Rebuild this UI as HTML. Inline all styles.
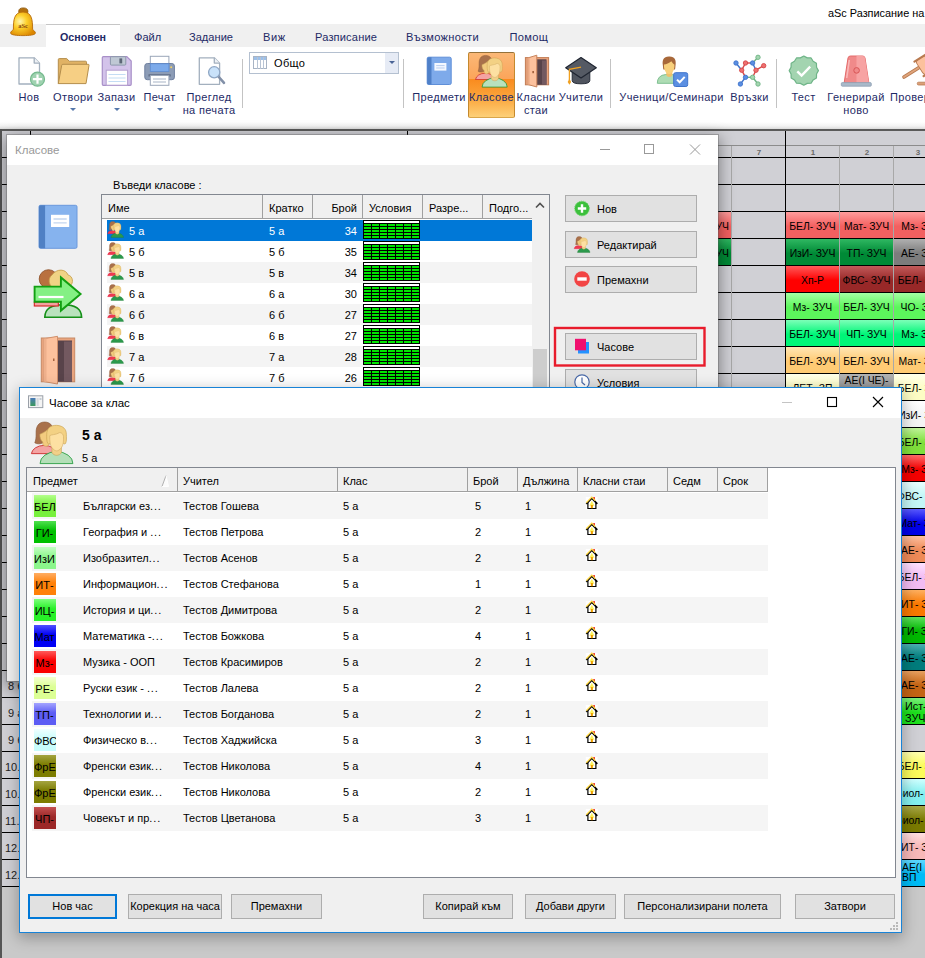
<!DOCTYPE html><html><head><meta charset="utf-8"><title>aSc</title><style>
*{box-sizing:border-box;margin:0;padding:0}
html,body{width:925px;height:958px;overflow:hidden;background:#fff}
body{position:relative;font-family:"Liberation Sans",sans-serif;font-size:11px;color:#000}
.abs{position:absolute}
.t{position:absolute;white-space:nowrap;line-height:14px}
.rb{position:absolute;white-space:nowrap;font-size:11.7px;color:#1e2a66;line-height:13px;text-align:center}
.tab{position:absolute;top:30px;font-size:11.1px;color:#1e2a66;white-space:nowrap;line-height:14px}
.cell{position:absolute;height:26px;font-size:10.4px;line-height:30px;text-align:center;white-space:nowrap;overflow:hidden;color:#000}
.hl{position:absolute;height:1px;background:#000}
.vl{position:absolute;width:1px;background:#a8a8a8}
.btn{position:absolute;background:#e1e1e1;border:1px solid #adadad;font-size:11px;text-align:center;white-space:nowrap}
.lbl{position:absolute;font-size:11px;white-space:nowrap;line-height:14px}
</style></head><body><div class="abs" style="left:0;top:0;width:925px;height:24px;background:#fff"></div><div class="t" style="left:828px;top:6px;font-size:10.9px;color:#000">aSc Разписание на</div><div class="abs" style="left:0;top:24px;width:925px;height:23px;background:#f0f0f0"></div><div class="abs" style="left:46px;top:24px;width:74px;height:23px;background:#fff;border-top:1px solid #c6c6c6"></div><div class="tab" style="left:60px;font-weight:bold;font-size:10.7px">Основен</div><div class="tab" style="left:134px;letter-spacing:0px">Файл</div><div class="tab" style="left:189px;letter-spacing:0px">Задание</div><div class="tab" style="left:263px;letter-spacing:0.6px">Виж</div><div class="tab" style="left:315px;letter-spacing:0.15px">Разписание</div><div class="tab" style="left:406px;letter-spacing:0.3px">Възможности</div><div class="tab" style="left:509.5px;letter-spacing:0.3px">Помощ</div><div class="abs" style="left:0;top:47px;width:925px;height:77px;background:#fff"></div><div class="abs" style="left:0;top:122px;width:925px;height:8px;background:linear-gradient(to bottom,#fff,#f3f3f3 50%,#dcdcdc 85%,#a8a8a8)"></div><div class="abs" id="tt" style="left:0;top:129px;width:925px;height:829px;background:#c9c9c9;overflow:hidden"><div class="abs" style="left:0;top:0;width:925px;height:757px;background:#d0d0d5"></div><div class="cell" style="left:678px;top:83px;width:53px;background:linear-gradient(to bottom,#ff9c9c,#f36060 55%);text-align:right;padding-right:2px;">- ЗУЧ</div><div class="cell" style="left:786px;top:83px;width:53px;background:linear-gradient(to bottom,#ff9c9c,#f36060 55%);">БЕЛ- ЗУЧ</div><div class="cell" style="left:840px;top:83px;width:53px;background:linear-gradient(to bottom,#ff9c9c,#f36060 55%);">Мат- ЗУЧ</div><div class="cell" style="left:894px;top:83px;width:54px;background:linear-gradient(to bottom,#ff9c9c,#f36060 55%);">Мз- ЗУЧ</div><div class="cell" style="left:678px;top:110px;width:53px;background:linear-gradient(to bottom,#2fb862,#008a36 55%);text-align:right;padding-right:2px;">- ЗУЧ</div><div class="cell" style="left:786px;top:110px;width:53px;background:linear-gradient(to bottom,#2fb862,#008a36 55%);">ИзИ- ЗУЧ</div><div class="cell" style="left:840px;top:110px;width:53px;background:linear-gradient(to bottom,#2fb862,#008a36 55%);">ТП- ЗУЧ</div><div class="cell" style="left:894px;top:110px;width:54px;background:linear-gradient(to bottom,#b0b0b0,#7c7c7c 55%);">АЕ- ЗУЧ</div><div class="cell" style="left:786px;top:137px;width:53px;background:linear-gradient(to bottom,#ff5a5a,#ff0000 55%);">Хп-Р</div><div class="cell" style="left:840px;top:137px;width:53px;background:linear-gradient(to bottom,#c25a5a,#982828 55%);">ФВС- ЗУЧ</div><div class="cell" style="left:894px;top:137px;width:54px;background:linear-gradient(to bottom,#c25a5a,#982828 55%);">БЕЛ- ЗУЧ</div><div class="cell" style="left:786px;top:164px;width:53px;background:linear-gradient(to bottom,#a4ffa4,#5cf65c 55%);">Мз- ЗУЧ</div><div class="cell" style="left:840px;top:164px;width:53px;background:linear-gradient(to bottom,#a4ffa4,#5cf65c 55%);">БЕЛ- ЗУЧ</div><div class="cell" style="left:894px;top:164px;width:54px;background:linear-gradient(to bottom,#a4ffa4,#5cf65c 55%);">ЧО- ЗУЧ</div><div class="cell" style="left:786px;top:191px;width:53px;background:linear-gradient(to bottom,#7dffb8,#00f678 55%);">БЕЛ- ЗУЧ</div><div class="cell" style="left:840px;top:191px;width:53px;background:linear-gradient(to bottom,#7dffb8,#00f678 55%);">ЧП- ЗУЧ</div><div class="cell" style="left:894px;top:191px;width:54px;background:linear-gradient(to bottom,#7dffb8,#00f678 55%);">Мз- ЗУЧ</div><div class="cell" style="left:786px;top:218px;width:53px;background:linear-gradient(to bottom,#ffe6b4,#ffcb74 55%);">БЕЛ- ЗУЧ</div><div class="cell" style="left:840px;top:218px;width:53px;background:linear-gradient(to bottom,#ffe6b4,#ffcb74 55%);">БЕЛ- ЗУЧ</div><div class="cell" style="left:894px;top:218px;width:54px;background:linear-gradient(to bottom,#ffe6b4,#ffcb74 55%);">Мат- ЗУЧ</div><div class="cell" style="left:786px;top:245px;width:53px;background:linear-gradient(to bottom,#ffffea,#fdfdc4 55%);">ЛЕТ- ЗП</div><div class="cell" style="left:894px;top:245px;width:54px;background:linear-gradient(to bottom,#ffffea,#fdfdc4 55%);">БЕЛ- ЗУЧ</div><div class="cell" style="left:894px;top:272px;width:54px;background:linear-gradient(to bottom,#ffffff,#f4f4f4 55%);">ИзИ- ЗУЧ</div><div class="cell" style="left:894px;top:299px;width:54px;background:linear-gradient(to bottom,#c0f49a,#7fe03c 55%);">БЕЛ- ЗУЧ</div><div class="cell" style="left:894px;top:326px;width:54px;background:linear-gradient(to bottom,#ff6a6a,#f40000 55%);">Мз- ЗУЧ</div><div class="cell" style="left:894px;top:353px;width:54px;background:linear-gradient(to bottom,#eaffff,#c4f6f6 55%);">ФВС- ЗУЧ</div><div class="cell" style="left:894px;top:380px;width:54px;background:linear-gradient(to bottom,#5a5aff,#0000e8 55%);">Мат- ЗУЧ</div><div class="cell" style="left:894px;top:407px;width:54px;background:linear-gradient(to bottom,#ffc0a0,#ee8a58 55%);">АЕ- ЗУЧ</div><div class="cell" style="left:894px;top:434px;width:54px;background:linear-gradient(to bottom,#ffe2ff,#f2bcf2 55%);">БЕЛ- ЗУЧ</div><div class="cell" style="left:894px;top:461px;width:54px;background:linear-gradient(to bottom,#ffb060,#fa7800 55%);">ИТ- ЗУЧ</div><div class="cell" style="left:894px;top:488px;width:54px;background:linear-gradient(to bottom,#5ce05c,#00b800 55%);">ГИ- ЗУЧ</div><div class="cell" style="left:894px;top:515px;width:54px;background:linear-gradient(to bottom,#4cb0b0,#007c7c 55%);">АЕ- ЗУЧ</div><div class="cell" style="left:894px;top:542px;width:54px;background:linear-gradient(to bottom,#e8a060,#c46414 55%);">АЕ- ЗУЧ</div><div class="cell" style="left:894px;top:623px;width:54px;background:linear-gradient(to bottom,#ffffb0,#fbfb5a 55%);">БЕЛ- ЗУЧ</div><div class="cell" style="left:894px;top:650px;width:54px;background:linear-gradient(to bottom,#d0ffff,#84f0f0 55%);">Биол- ЗУЧ</div><div class="cell" style="left:894px;top:677px;width:54px;background:linear-gradient(to bottom,#a8a848,#7a7a00 55%);">Биол- ЗУЧ</div><div class="cell" style="left:894px;top:704px;width:54px;background:linear-gradient(to bottom,#ffe0e0,#f8b8b8 55%);">ИТ- ЗУЧ</div><div class="cell" style="left:840px;top:245px;width:53px;background:linear-gradient(to bottom,#b4b4b4,#8a8a8a 70%);line-height:12px;padding-top:1px">АЕ(І ЧЕ)-<br>ЗУЧ</div><div class="cell" style="left:894px;top:569px;width:54px;background:linear-gradient(to bottom,#7cf07c,#1ee01e 55%);line-height:12px;padding:2px 0 0 11px;text-align:left;font-size:10.8px">Ист-<br>ЗУЧ</div><div class="cell" style="left:894px;top:731px;width:54px;background:linear-gradient(to bottom,#60d8ff,#00bcf6 55%);line-height:9.5px;padding:3px 0 0 8px;text-align:left">АЕ(І ЧЕ)-<br>ВП</div><div class="hl" style="left:2px;top:28px;width:923px"></div><div class="hl" style="left:2px;top:55px;width:923px"></div><div class="hl" style="left:2px;top:82px;width:923px"></div><div class="hl" style="left:2px;top:109px;width:923px"></div><div class="hl" style="left:2px;top:136px;width:923px"></div><div class="hl" style="left:2px;top:163px;width:923px"></div><div class="hl" style="left:2px;top:190px;width:923px"></div><div class="hl" style="left:2px;top:217px;width:923px"></div><div class="hl" style="left:2px;top:244px;width:923px"></div><div class="hl" style="left:2px;top:271px;width:923px"></div><div class="hl" style="left:2px;top:298px;width:923px"></div><div class="hl" style="left:2px;top:325px;width:923px"></div><div class="hl" style="left:2px;top:352px;width:923px"></div><div class="hl" style="left:2px;top:379px;width:923px"></div><div class="hl" style="left:2px;top:406px;width:923px"></div><div class="hl" style="left:2px;top:433px;width:923px"></div><div class="hl" style="left:2px;top:460px;width:923px"></div><div class="hl" style="left:2px;top:487px;width:923px"></div><div class="hl" style="left:2px;top:514px;width:923px"></div><div class="hl" style="left:2px;top:541px;width:923px"></div><div class="hl" style="left:2px;top:568px;width:923px"></div><div class="hl" style="left:2px;top:595px;width:923px"></div><div class="hl" style="left:2px;top:622px;width:923px"></div><div class="hl" style="left:2px;top:649px;width:923px"></div><div class="hl" style="left:2px;top:676px;width:923px"></div><div class="hl" style="left:2px;top:703px;width:923px"></div><div class="hl" style="left:2px;top:730px;width:923px"></div><div class="hl" style="left:2px;top:757px;width:923px"></div><div class="abs" style="left:30px;top:16px;width:895px;height:1px;background:#8c8c8c"></div><div class="vl" style="left:84px;top:17px;height:740px"></div><div class="vl" style="left:138px;top:17px;height:740px"></div><div class="vl" style="left:192px;top:17px;height:740px"></div><div class="vl" style="left:246px;top:17px;height:740px"></div><div class="vl" style="left:300px;top:17px;height:740px"></div><div class="vl" style="left:354px;top:17px;height:740px"></div><div class="vl" style="left:461px;top:17px;height:740px"></div><div class="vl" style="left:515px;top:17px;height:740px"></div><div class="vl" style="left:569px;top:17px;height:740px"></div><div class="vl" style="left:623px;top:17px;height:740px"></div><div class="vl" style="left:677px;top:17px;height:740px"></div><div class="vl" style="left:731px;top:17px;height:740px"></div><div class="vl" style="left:839px;top:17px;height:740px"></div><div class="vl" style="left:893px;top:17px;height:740px"></div><div class="abs" style="left:29.8px;top:1px;width:1.3px;height:756px;background:#000"></div><div class="abs" style="left:406.8px;top:1px;width:1.3px;height:756px;background:#000"></div><div class="abs" style="left:784.8px;top:1px;width:1.3px;height:756px;background:#000"></div><div class="t" style="left:749px;top:18px;width:20px;text-align:center;font-size:8px;font-weight:bold;color:#6a6a6a;line-height:11px">7</div><div class="t" style="left:803px;top:18px;width:20px;text-align:center;font-size:8px;font-weight:bold;color:#6a6a6a;line-height:11px">1</div><div class="t" style="left:857px;top:18px;width:20px;text-align:center;font-size:8px;font-weight:bold;color:#6a6a6a;line-height:11px">2</div><div class="t" style="left:908px;top:18px;width:20px;text-align:center;font-size:8px;font-weight:bold;color:#6a6a6a;line-height:11px">3</div><div class="t" style="left:8px;top:549.6px;font-size:11px;color:#222">8 б</div><div class="t" style="left:8px;top:576.6px;font-size:11px;color:#222">9 а</div><div class="t" style="left:8px;top:603.6px;font-size:11px;color:#222">9 б</div><div class="t" style="left:5px;top:630.6px;font-size:11px;color:#222">10.</div><div class="t" style="left:5px;top:657.6px;font-size:11px;color:#222">10.</div><div class="t" style="left:5px;top:684.6px;font-size:11px;color:#222">11.</div><div class="t" style="left:5px;top:711.6px;font-size:11px;color:#222">12.</div><div class="t" style="left:5px;top:738.6px;font-size:11px;color:#222">12.</div><div class="abs" style="left:0;top:0;width:925px;height:2px;background:#5a5a5a"></div><div class="abs" style="left:0;top:0;width:1.600px;height:829px;background:#555"></div></div><div class="abs" style="left:468px;top:52px;width:47px;height:66px;border:1px solid #c4892e;border-color:#94713a #c4892e #d9a64a #c4892e;border-radius:2px;background:linear-gradient(to bottom,#fbb877 0%,#fba55a 40%,#f98b1e 41%,#fba53c 70%,#fdd078 100%)"></div><div class="rb" style="left:-31px;width:120px;top:91px;font-size:11px;letter-spacing:0.35px;">Нов</div><div class="rb" style="left:13px;width:120px;top:91px;font-size:11px;letter-spacing:0.35px;">Отвори</div><div class="abs" style="left:70px;top:108px;width:0;height:0;border-left:3px solid transparent;border-right:3px solid transparent;border-top:3.5px solid #5577aa"></div><div class="rb" style="left:56.5px;width:120px;top:91px;font-size:11px;letter-spacing:0.35px;">Запази</div><div class="abs" style="left:113.5px;top:108px;width:0;height:0;border-left:3px solid transparent;border-right:3px solid transparent;border-top:3.5px solid #5577aa"></div><div class="rb" style="left:99.5px;width:120px;top:91px;font-size:11px;letter-spacing:0.35px;">Печат</div><div class="abs" style="left:156.5px;top:108px;width:0;height:0;border-left:3px solid transparent;border-right:3px solid transparent;border-top:3.5px solid #5577aa"></div><div class="rb" style="left:149px;width:120px;top:91px;font-size:11px;letter-spacing:0.35px;">Преглед</div><div class="rb" style="left:149px;width:120px;top:104px;font-size:11px;letter-spacing:0.35px;">на печата</div><div class="rb" style="left:379px;width:120px;top:91px;font-size:11px;letter-spacing:0.35px;">Предмети</div><div class="rb" style="left:431.5px;width:120px;top:91px;font-size:11px;letter-spacing:0.35px;">Класове</div><div class="rb" style="left:476px;width:120px;top:91px;font-size:11px;letter-spacing:0.35px;">Класни</div><div class="rb" style="left:476px;width:120px;top:104px;font-size:11px;letter-spacing:0.35px;">стаи</div><div class="rb" style="left:521px;width:120px;top:91px;font-size:11px;letter-spacing:0.35px;">Учители</div><div class="rb" style="left:611.5px;width:120px;top:91px;font-size:11px;letter-spacing:0.35px;">Ученици/Семинари</div><div class="rb" style="left:689.5px;width:120px;top:91px;font-size:11px;letter-spacing:0.35px;">Връзки</div><div class="rb" style="left:743.5px;width:120px;top:91px;font-size:11px;letter-spacing:0.35px;">Тест</div><div class="rb" style="left:796px;width:120px;top:91px;font-size:11px;letter-spacing:0.35px;">Генерирай</div><div class="rb" style="left:796px;width:120px;top:104px;font-size:11px;letter-spacing:0.35px;">ново</div><div class="rb" style="left:890px;top:91px;text-align:left;font-size:11px;letter-spacing:0.35px;">Проверка</div><div class="abs" style="left:242px;top:59px;width:1px;height:49px;background:#c3c3c3"></div><div class="abs" style="left:403px;top:59px;width:1px;height:49px;background:#c3c3c3"></div><div class="abs" style="left:610px;top:59px;width:1px;height:49px;background:#c3c3c3"></div><div class="abs" style="left:776px;top:59px;width:1px;height:49px;background:#c3c3c3"></div><div class="abs" style="left:249px;top:52px;width:150px;height:22px;border:1px solid #b4c0d0;background:#fff"></div><div class="abs" style="left:385px;top:53px;width:13px;height:20px;background:#e6ebf5"></div><div class="abs" style="left:388.5px;top:61px;width:0;height:0;border-left:3px solid transparent;border-right:3px solid transparent;border-top:3.5px solid #4a6496"></div><div class="t" style="left:274px;top:56px;font-size:11px;letter-spacing:0.35px;color:#000">Общо</div><svg class="abs" style="left:0;top:47px" width="925" height="76" viewBox="0 47 925 76"><rect x="253.5" y="56.5" width="13" height="12" fill="#fff" stroke="#a8b4c4"/><rect x="254" y="57" width="12" height="3" fill="#9cc0ea"/><path d="M257.5 57v12M260.5 57v12M263.5 57v12" stroke="#b8c4d4" stroke-width="1" fill="none"/><path d="M19 57.8h15.2l5.3 5.3V84h-20.5z" fill="#fff" stroke="#a3b0be" stroke-width="1.3" stroke-linejoin="round"/><path d="M34.2 57.8v5.3h5.3" fill="#eef1f5" stroke="#a3b0be" stroke-width="1.3" stroke-linejoin="round"/><circle cx="37.5" cy="79.2" r="7" fill="#9fd2b0" stroke="#74b98d" stroke-width="1.2"/><path d="M37.5 74.6v9.2M32.9 79.2h9.2" stroke="#fff" stroke-width="2.2"/><path d="M58.3 83.6V59.6q0-1 1-1h7.4l2.6 2.6h16.2q1 0 1 1v3z" fill="#e0b264" stroke="#b48e4c" stroke-width="1"/><path d="M58.3 83.6l3.4-18.3q.2-1 1.2-1h25.3q1 0 .8 1l-3 18.3z" fill="#f6cf84" stroke="#b48e4c" stroke-width="1" stroke-linejoin="round"/><path d="M103.3 56.7h23.5l4.4 4.4v23.2q0 1-1 1h-26.9q-1 0-1-1v-26.600q0-1 1-1z" fill="#d3c3ea" stroke="#a88fc8" stroke-width="1.2"/><rect x="110.4" y="56.7" width="15.4" height="8.4" rx="1" fill="#bfc8d4" stroke="#8c98aa" stroke-width="1"/><rect x="119.4" y="58.4" width="2.8" height="5" fill="#5c6676"/><rect x="106.2" y="70.2" width="21.4" height="15" fill="#fff" stroke="#b4a0d0" stroke-width="1"/><path d="M108.5 74.5h17M108.500 78h17M108.500 81.500h17" stroke="#c4ddf4" stroke-width="1.200"/><rect x="150.3" y="56.3" width="18.600" height="9" fill="#fff" stroke="#9aa6b8" stroke-width="1"/><rect x="144.800" y="63.500" width="29.600" height="16.200" rx="2.500" fill="#8c9cb6" stroke="#6f80a0" stroke-width="1"/><rect x="150.300" y="63.800" width="18.600" height="7.600" fill="#7caaea" stroke="#5c8cd4" stroke-width=".8"/><circle cx="171.200" cy="67.300" r="1" fill="#f4d060"/><rect x="148.500" y="74.300" width="22.200" height="2.200" fill="#5c6a84"/><rect x="150.300" y="75.500" width="18.600" height="9.800" fill="#fff" stroke="#9aa6b8" stroke-width="1"/><path d="M153 79h13M153 82h13" stroke="#a8b4c6" stroke-width="1.200"/><path d="M199.300 57.800h15l5.300 5.300V84.300h-20.300z" fill="#fff" stroke="#a3b0be" stroke-width="1.300" stroke-linejoin="round"/><path d="M214.300 57.800v5.300h5.300" fill="#eef1f5" stroke="#a3b0be" stroke-width="1.300" stroke-linejoin="round"/><path d="M218.400 76.500l5.600 6.300" stroke="#8290a8" stroke-width="2.600" stroke-linecap="round"/><circle cx="214.200" cy="72.300" r="5.600" fill="#c9e2fa" stroke="#8ea6c4" stroke-width="1.300"/><rect x="427.200" y="57.200" width="24" height="27.300" rx="1.500" fill="#7eaaea" stroke="#5f8fd8" stroke-width="1"/><path d="M427.200 58.700q0-1.500 1.500-1.500h2.800v27.300h-2.800q-1.500 0-1.500-1.500z" fill="#4f80c8"/><rect x="434.400" y="63" width="12" height="7.600" fill="#f4f8ff"/><path d="M436.200 65.600h8.400M436.200 68h8.400" stroke="#b9cdee" stroke-width="1"/><path d="M 475.50 79.50 A 9.80 7.00 0 0 1 495.00 79.50 Z" fill="#f4a3a3" stroke="#c82424" stroke-width="0.70"/><path d="M 485.70 55.40 C 480.20 55.40 479.00 59.70 479.10 63.70 C 479.20 67.20 478.80 69.70 478.10 71.20 C 479.70 72.40 482.70 72.20 484.20 71.20 L 491.20 65.20 L 491.50 58.70 C 490.00 56.20 488.00 55.40 485.70 55.40 Z" fill="#a9714b" stroke="#8c5a38" stroke-width="0.50"/><path d="M 482.00 64.70 C 483.70 64.00 485.70 63.20 487.20 61.70 L 489.20 61.70 L 489.20 72.20 C 488.20 74.40 485.20 74.40 484.20 72.40 L 484.20 70.70 C 482.60 69.40 481.90 67.20 482.00 64.70 Z" fill="#f3cb7f" stroke="#c9a55a" stroke-width="0.50"/><path d="M 482.10 87.10 A 12.55 9.10 0 0 1 507.20 87.10 Z" fill="#b8e1bd" stroke="#169026" stroke-width="0.70"/><path d="M 491.20 74.70 L 491.20 78.70 C 492.70 81.50 496.90 81.50 498.40 78.70 L 498.40 74.70 Z" fill="#f1d089" stroke="#c9a55a" stroke-width="0.50"/><path d="M 494.70 57.90 C 489.70 57.70 487.20 60.70 487.20 64.70 C 487.20 67.20 487.00 69.70 488.00 71.70 C 488.80 72.50 489.80 72.00 490.00 71.20 L 499.60 71.20 C 499.80 72.00 500.80 72.50 501.60 71.70 C 502.60 69.70 502.20 67.20 502.20 64.70 C 502.20 61.20 500.20 58.20 494.70 57.90 Z" fill="#f3d184" stroke="#caa352" stroke-width="0.50"/><path d="M 489.50 65.80 C 490.70 64.80 493.70 65.40 497.20 63.40 C 498.80 63.60 499.80 64.80 500.00 66.20 C 500.20 70.20 499.80 73.20 498.40 75.00 C 497.20 76.60 495.80 77.40 494.80 77.40 C 493.80 77.40 492.40 76.60 491.20 75.00 C 489.80 73.20 489.40 70.20 489.50 65.80 Z" fill="#fde0a2" stroke="#d4ae68" stroke-width="0.50"/><rect x="525.4" y="57.600" width="23.200" height="27.200" fill="#e9a47e" stroke="#c27c54" stroke-width="1"/><rect x="536.500" y="59.300" width="10" height="25.500" fill="#58434a"/><rect x="542" y="60.500" width="4.500" height="24.300" fill="#735960"/><path d="M527.300 58.100L536.800 55.200V87L527.300 84.300Z" fill="#fcc19d" stroke="#c8845c" stroke-width="1" stroke-linejoin="round"/><path d="M527.300 58.100l2.200-.6v27.400l-2.200-.6z" fill="#eaa882"/><rect x="532.300" y="71" width="1.700" height="2.200" fill="#a5633f"/><path d="M572.200 71v9.500q0 3.300 8.800 3.300t8.800-3.300V71z" fill="#50555f" stroke="#262c38" stroke-width="1"/><path d="M581 57.600L596.300 67.800L581 78L565.700 67.800Z" fill="#555a64" stroke="#1f2531" stroke-width="1.200" stroke-linejoin="round"/><path d="M581 67.200L569.400 69.400V80" fill="none" stroke="#f0a020" stroke-width="1.300"/><path d="M569.400 78.500l-1.700 3.500l1.700 2.800l1.700-2.800z" fill="#f0a020"/><path d="M657.300 83.300q0-8 8.500-8.800h6.500q8.500.8 8.500 8.800z" fill="#aedcb4" stroke="#7fc092" stroke-width="1"/><path d="M666.300 71h6v4.500q-3 3-6 0z" fill="#efc06c"/><path d="M669.200 56.500c-5.800-.2-7 4-6.400 8.200c.3 2 .2 3.600.6 4.800h11.600c.4-1.200.3-2.800.6-4.800c.6-4.200-.6-8.400-6.400-8.200z" fill="#a8683a"/><path d="M664 64.600c2.200-.4 5.200-1.400 7.400-3.400c.8 1.600 2 2.600 3 3.400c.4 5-1.800 9.400-5.200 9.400s-5.600-4.400-5.200-9.400z" fill="#f8d07c"/><rect x="673.700" y="72.700" width="14" height="13.800" rx="1.800" fill="#5b8fe2" stroke="#3f74cc" stroke-width="1"/><path d="M677 79.600l2.700 2.700l5-5.400" fill="none" stroke="#fff" stroke-width="2"/><path d="M736 63L741.7 70.2" stroke="#3f74cc" stroke-width="1.400"/><path d="M745.5 63L741.7 70.2" stroke="#d64848" stroke-width="1.400"/><path d="M745.5 63L752.6 63" stroke="#d64848" stroke-width="1.400"/><path d="M752.6 63L756 70.2" stroke="#3f74cc" stroke-width="1.400"/><path d="M752.6 63L758 57.3" stroke="#6fb486" stroke-width="1.400"/><path d="M756 70.2L763.7 65.7" stroke="#d64848" stroke-width="1.400"/><path d="M741.7 70.2L745.5 77.3" stroke="#d64848" stroke-width="1.400"/><path d="M756 70.2L752.6 77.3" stroke="#d64848" stroke-width="1.400"/><path d="M745.5 77.3L752.6 77.3" stroke="#6fb486" stroke-width="1.400"/><path d="M745.5 77.3L740.4 84" stroke="#3f74cc" stroke-width="1.400"/><path d="M752.6 77.3L758 84" stroke="#6fb486" stroke-width="1.400"/><circle cx="736" cy="63" r="2.200" fill="#5b8fe2" stroke="#3f74cc" stroke-width=".9"/><circle cx="745.5" cy="63" r="2.200" fill="#ee7070" stroke="#d64848" stroke-width=".9"/><circle cx="752.6" cy="63" r="2.200" fill="#5b8fe2" stroke="#3f74cc" stroke-width=".9"/><circle cx="758" cy="57.3" r="2.200" fill="#a4d6b0" stroke="#6fb486" stroke-width=".9"/><circle cx="763.7" cy="65.7" r="2.200" fill="#ee7070" stroke="#d64848" stroke-width=".9"/><circle cx="741.7" cy="70.2" r="2.200" fill="#ee7070" stroke="#d64848" stroke-width=".9"/><circle cx="756" cy="70.2" r="2.200" fill="#ee7070" stroke="#d64848" stroke-width=".9"/><circle cx="745.5" cy="77.3" r="2.200" fill="#5b8fe2" stroke="#3f74cc" stroke-width=".9"/><circle cx="752.6" cy="77.3" r="2.200" fill="#a4d6b0" stroke="#6fb486" stroke-width=".9"/><circle cx="740.4" cy="84" r="2.200" fill="#5b8fe2" stroke="#3f74cc" stroke-width=".9"/><circle cx="758" cy="84" r="2.200" fill="#a4d6b0" stroke="#6fb486" stroke-width=".9"/><path d="M803.80 56.00 807.22 57.85 811.10 57.96 813.13 61.27 816.44 63.30 816.55 67.18 818.40 70.60 816.55 74.02 816.44 77.90 813.13 79.93 811.10 83.24 807.22 83.35 803.80 85.20 800.38 83.35 796.50 83.24 794.47 79.93 791.16 77.90 791.05 74.02 789.20 70.60 791.05 67.18 791.16 63.30 794.47 61.27 796.50 57.96 800.38 57.85Z" fill="#a3d4b0" stroke="#6eb487" stroke-width="1.200" stroke-linejoin="round"/><path d="M797.300 71.300l4.300 4.300l8.600-9" fill="none" stroke="#fff" stroke-width="2.400"/><path d="M844.200 82.600L848 58q.4-2 2.400-2h12.200q2 0 2.400 2L868.800 82.600Z" fill="#f08a8a" stroke="#e46a6a" stroke-width="1"/><path d="M856.500 56h6.100q2 0 2.400 2L868.800 82.600H856.500Z" fill="#f7a3a3"/><path d="M849.300 60l-2.600 18" stroke="#f9b8b8" stroke-width="1.600"/><circle cx="856.600" cy="70.400" r="2.800" fill="#f08a8a" stroke="#d85656" stroke-width="1"/><rect x="841.300" y="82.600" width="30" height="3.600" rx="1" fill="#a9b9c9" stroke="#8ea0b4" stroke-width=".8"/><path d="M904 77.100L919.500 67.300" stroke="#b87a50" stroke-width="3.600" stroke-linecap="round"/><path d="M904 77.100L919.500 67.300" stroke="#e0a57c" stroke-width="1.800" stroke-linecap="round"/><g transform="translate(-0.5 1.600) rotate(-32 919.500 67.300)"><rect x="920.500" y="58.800" width="12" height="17" rx="3.500" fill="#fcc19d" stroke="#b87a50" stroke-width=".9"/><rect x="918.500" y="57.600" width="16" height="2.200" rx="1" fill="#b87a50"/><rect x="918.500" y="74.800" width="16" height="2.200" rx="1" fill="#b87a50"/></g><rect x="917.300" y="82.200" width="14" height="2.800" rx="1.200" fill="#dca078" stroke="#b87a50" stroke-width=".8"/></svg><svg class="abs" style="left:8px;top:6px" width="30" height="38" viewBox="8 6 30 38"><defs><radialGradient id="bg1" cx="0.38" cy="0.4" r="0.68"><stop offset="0" stop-color="#fff6b0"/><stop offset="0.4" stop-color="#fdd02c"/><stop offset="1" stop-color="#dc8600"/></radialGradient></defs><ellipse cx="23.300" cy="11.400" rx="4.600" ry="3.500" fill="#b4700e" stroke="#8a5408" stroke-width=".8"/><path d="M13.400 29.500C13.400 20 14 12 23 12S32.600 20 32.600 29.500C33.900 30.500 35.400 31.800 35.400 33C35.400 35 29.300 35.600 23 35.600S10.600 35 10.600 33C10.600 31.800 12.100 30.500 13.400 29.500Z" fill="url(#bg1)" stroke="#b86c08" stroke-width=".9"/><text x="23" y="28.300" font-family="Liberation Serif,serif" font-size="6.500" font-weight="bold" fill="#8a4a10" text-anchor="middle">aSc</text></svg><div class="abs" id="d1" style="left:7px;top:135px;width:711px;height:546px;background:#f0f0f0;box-shadow:0 0 0 1px rgba(90,90,90,.35),0 4px 14px 2px rgba(0,0,0,.38)"><div class="abs" style="left:0;top:0;width:711px;height:30px;background:#fff"></div><div class="t" style="left:8px;top:8px;font-size:11.5px;color:#999">Класове</div><svg class="abs" style="left:588px;top:5px;" width="115" height="20" viewBox="595 140 115 20"><path d="M600 149.500h10" stroke="#999" stroke-width="1"/><rect x="644.500" y="144.500" width="9" height="9" fill="none" stroke="#999" stroke-width="1"/><path d="M690 144.500l10 10M700 144.500l-10 10" stroke="#999" stroke-width="1"/></svg><div class="lbl" style="left:106px;top:43px;">Въведи класове :</div><svg class="abs" style="left:23px;top:65px;" width="60" height="200" viewBox="30 200 60 200"><rect x="39" y="205.300" width="38" height="43" rx="1.500" fill="#86b3ee" stroke="#6a98dc" stroke-width="1"/><path d="M39 206.800q0-1.500 1.500-1.500h4.600v43h-4.600q-1.500 0-1.500-1.500z" fill="#4f80c4"/><rect x="51" y="214.800" width="18.200" height="12.200" fill="#fff"/><path d="M53.500 219h13.200M53.500 222.800h13.200" stroke="#c4d6f0" stroke-width="1.300"/><circle cx="48.500" cy="279" r="9.300" fill="#b9713f" stroke="#8a4c24" stroke-width=".8"/><path d="M52 275c5-7 14-6 16 0c5 1 6 8 2 11l-2 8h-14l-3-8c-3-4-2-9 1-11z" fill="#f0d385" stroke="#c49a48" stroke-width=".8"/><path d="M44.800 317.300q0-12.500 18.400-12.500t18.400 12.500z" fill="#b9e2bd" stroke="#159018" stroke-width="1.600"/><rect x="34.300" y="302" width="24" height="4" fill="#f4a0a0" stroke="#d42020" stroke-width="1.100"/><path d="M34.600 286.600h26.300v-9.200L80.600 294L60.900 310.600v-8.900H34.600z" fill="#84f084" stroke="#12a012" stroke-width="1.900" stroke-linejoin="miter"/><path d="M38.500 297h25" stroke="#fff" stroke-width="2.200"/><rect x="41.300" y="338" width="33.400" height="43.800" fill="#e9a47e" stroke="#c88a64" stroke-width="1"/><rect x="57.500" y="340.500" width="14.500" height="41.300" fill="#58434a"/><rect x="64" y="341.500" width="8" height="40.300" fill="#735960"/><path d="M43.500 338.800L57.500 336.300V384L43.500 381.500Z" fill="#fcc19d" stroke="#d0906c" stroke-width="1" stroke-linejoin="round"/><path d="M43.500 338.800l3-.6v44l-3-.7z" fill="#eeb08c"/><rect x="53" y="358.500" width="1.500" height="2.500" fill="#a5633f"/></svg><div class="abs" style="left:94px;top:59px;width:449px;height:300px;background:#fff;border:1px solid #828790"></div><div class="abs" style="left:95px;top:60px;width:430px;height:24px;background:#f0f0f0;border-bottom:1px solid #a0a0a0"></div><div class="abs" style="left:255px;top:60px;width:1px;height:24px;background:#a0a0a0"></div><div class="abs" style="left:305px;top:60px;width:1px;height:24px;background:#a0a0a0"></div><div class="abs" style="left:355px;top:60px;width:1px;height:24px;background:#a0a0a0"></div><div class="abs" style="left:415px;top:60px;width:1px;height:24px;background:#a0a0a0"></div><div class="abs" style="left:475px;top:60px;width:1px;height:24px;background:#a0a0a0"></div><div class="lbl" style="left:101px;top:66px;">Име</div><div class="lbl" style="left:262px;top:66px;">Кратко</div><div class="lbl" style="left:362px;top:66px;">Условия</div><div class="lbl" style="left:422px;top:66px;">Разре...</div><div class="lbl" style="left:482px;top:66px;">Подго...</div><div class="lbl" style="left:305px;top:66px;width:45px;text-align:right">Брой</div><div class="abs" style="left:525px;top:60px;width:17px;height:298px;background:#f0f0f0"></div><div class="abs" style="left:526px;top:214px;width:14px;height:140px;background:#cdcdcd"></div><svg class="abs" style="left:527px;top:65px;" width="12" height="10" viewBox="0 0 12 10"><path d="M2 7.500l4-4l4 4" fill="none" stroke="#505050" stroke-width="1.600"/></svg><div class="abs" style="left:100px;top:85px;width:425px;height:21px;background:#0078d7"></div><div class="lbl" style="left:122px;top:89px;color:#fff">5 а</div><div class="lbl" style="left:262px;top:89px;color:#fff">5 а</div><div class="lbl" style="left:305px;top:89px;width:45px;text-align:right;color:#fff">34</div><div class="abs" style="left:100px;top:106px;width:425px;height:21px;background:#fff"></div><div class="lbl" style="left:122px;top:110px;color:#000">5 б</div><div class="lbl" style="left:262px;top:110px;color:#000">5 б</div><div class="lbl" style="left:305px;top:110px;width:45px;text-align:right;color:#000">35</div><div class="abs" style="left:100px;top:127px;width:425px;height:21px;background:#f4f4f4"></div><div class="lbl" style="left:122px;top:131px;color:#000">5 в</div><div class="lbl" style="left:262px;top:131px;color:#000">5 в</div><div class="lbl" style="left:305px;top:131px;width:45px;text-align:right;color:#000">34</div><div class="abs" style="left:100px;top:148px;width:425px;height:21px;background:#fff"></div><div class="lbl" style="left:122px;top:152px;color:#000">6 а</div><div class="lbl" style="left:262px;top:152px;color:#000">6 а</div><div class="lbl" style="left:305px;top:152px;width:45px;text-align:right;color:#000">30</div><div class="abs" style="left:100px;top:169px;width:425px;height:21px;background:#f4f4f4"></div><div class="lbl" style="left:122px;top:173px;color:#000">6 б</div><div class="lbl" style="left:262px;top:173px;color:#000">6 б</div><div class="lbl" style="left:305px;top:173px;width:45px;text-align:right;color:#000">27</div><div class="abs" style="left:100px;top:190px;width:425px;height:21px;background:#fff"></div><div class="lbl" style="left:122px;top:194px;color:#000">6 в</div><div class="lbl" style="left:262px;top:194px;color:#000">6 в</div><div class="lbl" style="left:305px;top:194px;width:45px;text-align:right;color:#000">27</div><div class="abs" style="left:100px;top:211px;width:425px;height:21px;background:#f4f4f4"></div><div class="lbl" style="left:122px;top:215px;color:#000">7 а</div><div class="lbl" style="left:262px;top:215px;color:#000">7 а</div><div class="lbl" style="left:305px;top:215px;width:45px;text-align:right;color:#000">28</div><div class="abs" style="left:100px;top:232px;width:425px;height:21px;background:#fff"></div><div class="lbl" style="left:122px;top:236px;color:#000">7 б</div><div class="lbl" style="left:262px;top:236px;color:#000">7 б</div><div class="lbl" style="left:305px;top:236px;width:45px;text-align:right;color:#000">26</div><div class="abs" style="left:100px;top:253px;width:425px;height:21px;background:#f4f4f4"></div><div class="lbl" style="left:122px;top:257px;color:#000">7 в</div><div class="lbl" style="left:262px;top:257px;color:#000">7 в</div><div class="lbl" style="left:305px;top:257px;width:45px;text-align:right;color:#000">27</div><svg class="abs" style="left:93px;top:80px;" width="330" height="200" viewBox="100 215 330 200"><path d="M 107.65 233.65 A 4.90 3.50 0 0 1 117.40 233.65 Z" fill="#f03a50" stroke="#e02040" stroke-width="0.35"/><path d="M 112.75 221.60 C 110.00 221.60 109.40 223.75 109.45 225.75 C 109.50 227.50 109.30 228.75 108.95 229.50 C 109.75 230.10 111.25 230.00 112.00 229.50 L 115.50 226.50 L 115.65 223.25 C 114.90 222.00 113.90 221.60 112.75 221.60 Z" fill="#a9714b" stroke="#8c5a38" stroke-width="0.25"/><path d="M 110.90 226.25 C 111.75 225.90 112.75 225.50 113.50 224.75 L 114.50 224.75 L 114.50 230.00 C 114.00 231.10 112.50 231.10 112.00 230.10 L 112.00 229.25 C 111.20 228.60 110.85 227.50 110.90 226.25 Z" fill="#f3cb7f" stroke="#c9a55a" stroke-width="0.25"/><path d="M 110.95 237.45 A 6.28 4.55 0 0 1 123.50 237.45 Z" fill="#2c9a4c" stroke="#1c7c38" stroke-width="0.35"/><path d="M 115.50 231.25 L 115.50 233.25 C 116.25 234.65 118.35 234.65 119.10 233.25 L 119.10 231.25 Z" fill="#f1d089" stroke="#c9a55a" stroke-width="0.25"/><path d="M 117.25 222.85 C 114.75 222.75 113.50 224.25 113.50 226.25 C 113.50 227.50 113.40 228.75 113.90 229.75 C 114.30 230.15 114.80 229.90 114.90 229.50 L 119.70 229.50 C 119.80 229.90 120.30 230.15 120.70 229.75 C 121.20 228.75 121.00 227.50 121.00 226.25 C 121.00 224.50 120.00 223.00 117.25 222.85 Z" fill="#f3d184" stroke="#caa352" stroke-width="0.25"/><path d="M 114.65 226.80 C 115.25 226.30 116.75 226.60 118.50 225.60 C 119.30 225.70 119.80 226.30 119.90 227.00 C 120.00 229.00 119.80 230.50 119.10 231.40 C 118.50 232.20 117.80 232.60 117.30 232.60 C 116.80 232.60 116.10 232.20 115.50 231.40 C 114.80 230.50 114.60 229.00 114.65 226.80 Z" fill="#fde0a2" stroke="#d4ae68" stroke-width="0.25"/><rect x="363" y="220" width="57" height="19" fill="#000"/><rect x="364" y="221" width="55" height="2" fill="#fff"/><rect x="364" y="224" width="7" height="2" fill="#00e400"/><rect x="364" y="227" width="7" height="2" fill="#00e400"/><rect x="364" y="230" width="7" height="2" fill="#00e400"/><rect x="364" y="233" width="7" height="2" fill="#00e400"/><rect x="364" y="236" width="7" height="2" fill="#00e400"/><rect x="372" y="224" width="7" height="2" fill="#00e400"/><rect x="372" y="227" width="7" height="2" fill="#00e400"/><rect x="372" y="230" width="7" height="2" fill="#00e400"/><rect x="372" y="233" width="7" height="2" fill="#00e400"/><rect x="372" y="236" width="7" height="2" fill="#00e400"/><rect x="380" y="224" width="7" height="2" fill="#00e400"/><rect x="380" y="227" width="7" height="2" fill="#00e400"/><rect x="380" y="230" width="7" height="2" fill="#00e400"/><rect x="380" y="233" width="7" height="2" fill="#00e400"/><rect x="380" y="236" width="7" height="2" fill="#00e400"/><rect x="388" y="224" width="7" height="2" fill="#00e400"/><rect x="388" y="227" width="7" height="2" fill="#00e400"/><rect x="388" y="230" width="7" height="2" fill="#00e400"/><rect x="388" y="233" width="7" height="2" fill="#00e400"/><rect x="388" y="236" width="7" height="2" fill="#00e400"/><rect x="396" y="224" width="7" height="2" fill="#00e400"/><rect x="396" y="227" width="7" height="2" fill="#00e400"/><rect x="396" y="230" width="7" height="2" fill="#00e400"/><rect x="396" y="233" width="7" height="2" fill="#00e400"/><rect x="396" y="236" width="7" height="2" fill="#00e400"/><rect x="404" y="224" width="7" height="2" fill="#00e400"/><rect x="404" y="227" width="7" height="2" fill="#00e400"/><rect x="404" y="230" width="7" height="2" fill="#00e400"/><rect x="404" y="233" width="7" height="2" fill="#00e400"/><rect x="404" y="236" width="7" height="2" fill="#00e400"/><rect x="412" y="224" width="7" height="2" fill="#00e400"/><rect x="412" y="227" width="7" height="2" fill="#00e400"/><rect x="412" y="230" width="7" height="2" fill="#00e400"/><rect x="412" y="233" width="7" height="2" fill="#00e400"/><rect x="412" y="236" width="7" height="2" fill="#00e400"/><path d="M 107.65 254.65 A 4.90 3.50 0 0 1 117.40 254.65 Z" fill="#f03a50" stroke="#e02040" stroke-width="0.35"/><path d="M 112.75 242.60 C 110.00 242.60 109.40 244.75 109.45 246.75 C 109.50 248.50 109.30 249.75 108.95 250.50 C 109.75 251.10 111.25 251.00 112.00 250.50 L 115.50 247.50 L 115.65 244.25 C 114.90 243.00 113.90 242.60 112.75 242.60 Z" fill="#a9714b" stroke="#8c5a38" stroke-width="0.25"/><path d="M 110.90 247.25 C 111.75 246.90 112.75 246.50 113.50 245.75 L 114.50 245.75 L 114.50 251.00 C 114.00 252.10 112.50 252.10 112.00 251.10 L 112.00 250.25 C 111.20 249.60 110.85 248.50 110.90 247.25 Z" fill="#f3cb7f" stroke="#c9a55a" stroke-width="0.25"/><path d="M 110.95 258.45 A 6.28 4.55 0 0 1 123.50 258.45 Z" fill="#2c9a4c" stroke="#1c7c38" stroke-width="0.35"/><path d="M 115.50 252.25 L 115.50 254.25 C 116.25 255.65 118.35 255.65 119.10 254.25 L 119.10 252.25 Z" fill="#f1d089" stroke="#c9a55a" stroke-width="0.25"/><path d="M 117.25 243.85 C 114.75 243.75 113.50 245.25 113.50 247.25 C 113.50 248.50 113.40 249.75 113.90 250.75 C 114.30 251.15 114.80 250.90 114.90 250.50 L 119.70 250.50 C 119.80 250.90 120.30 251.15 120.70 250.75 C 121.20 249.75 121.00 248.50 121.00 247.25 C 121.00 245.50 120.00 244.00 117.25 243.85 Z" fill="#f3d184" stroke="#caa352" stroke-width="0.25"/><path d="M 114.65 247.80 C 115.25 247.30 116.75 247.60 118.50 246.60 C 119.30 246.70 119.80 247.30 119.90 248.00 C 120.00 250.00 119.80 251.50 119.10 252.40 C 118.50 253.20 117.80 253.60 117.30 253.60 C 116.80 253.60 116.10 253.20 115.50 252.40 C 114.80 251.50 114.60 250.00 114.65 247.80 Z" fill="#fde0a2" stroke="#d4ae68" stroke-width="0.25"/><rect x="363" y="241" width="57" height="19" fill="#000"/><rect x="364" y="242" width="55" height="2" fill="#fff"/><rect x="364" y="245" width="7" height="2" fill="#00e400"/><rect x="364" y="248" width="7" height="2" fill="#00e400"/><rect x="364" y="251" width="7" height="2" fill="#00e400"/><rect x="364" y="254" width="7" height="2" fill="#00e400"/><rect x="364" y="257" width="7" height="2" fill="#00e400"/><rect x="372" y="245" width="7" height="2" fill="#00e400"/><rect x="372" y="248" width="7" height="2" fill="#00e400"/><rect x="372" y="251" width="7" height="2" fill="#00e400"/><rect x="372" y="254" width="7" height="2" fill="#00e400"/><rect x="372" y="257" width="7" height="2" fill="#00e400"/><rect x="380" y="245" width="7" height="2" fill="#00e400"/><rect x="380" y="248" width="7" height="2" fill="#00e400"/><rect x="380" y="251" width="7" height="2" fill="#00e400"/><rect x="380" y="254" width="7" height="2" fill="#00e400"/><rect x="380" y="257" width="7" height="2" fill="#00e400"/><rect x="388" y="245" width="7" height="2" fill="#00e400"/><rect x="388" y="248" width="7" height="2" fill="#00e400"/><rect x="388" y="251" width="7" height="2" fill="#00e400"/><rect x="388" y="254" width="7" height="2" fill="#00e400"/><rect x="388" y="257" width="7" height="2" fill="#00e400"/><rect x="396" y="245" width="7" height="2" fill="#00e400"/><rect x="396" y="248" width="7" height="2" fill="#00e400"/><rect x="396" y="251" width="7" height="2" fill="#00e400"/><rect x="396" y="254" width="7" height="2" fill="#00e400"/><rect x="396" y="257" width="7" height="2" fill="#00e400"/><rect x="404" y="245" width="7" height="2" fill="#00e400"/><rect x="404" y="248" width="7" height="2" fill="#00e400"/><rect x="404" y="251" width="7" height="2" fill="#00e400"/><rect x="404" y="254" width="7" height="2" fill="#00e400"/><rect x="404" y="257" width="7" height="2" fill="#00e400"/><rect x="412" y="245" width="7" height="2" fill="#00e400"/><rect x="412" y="248" width="7" height="2" fill="#00e400"/><rect x="412" y="251" width="7" height="2" fill="#00e400"/><rect x="412" y="254" width="7" height="2" fill="#00e400"/><rect x="412" y="257" width="7" height="2" fill="#00e400"/><path d="M 107.65 275.65 A 4.90 3.50 0 0 1 117.40 275.65 Z" fill="#f03a50" stroke="#e02040" stroke-width="0.35"/><path d="M 112.75 263.60 C 110.00 263.60 109.40 265.75 109.45 267.75 C 109.50 269.50 109.30 270.75 108.95 271.50 C 109.75 272.10 111.25 272.00 112.00 271.50 L 115.50 268.50 L 115.65 265.25 C 114.90 264.00 113.90 263.60 112.75 263.60 Z" fill="#a9714b" stroke="#8c5a38" stroke-width="0.25"/><path d="M 110.90 268.25 C 111.75 267.90 112.75 267.50 113.50 266.75 L 114.50 266.75 L 114.50 272.00 C 114.00 273.10 112.50 273.10 112.00 272.10 L 112.00 271.25 C 111.20 270.60 110.85 269.50 110.90 268.25 Z" fill="#f3cb7f" stroke="#c9a55a" stroke-width="0.25"/><path d="M 110.95 279.45 A 6.28 4.55 0 0 1 123.50 279.45 Z" fill="#2c9a4c" stroke="#1c7c38" stroke-width="0.35"/><path d="M 115.50 273.25 L 115.50 275.25 C 116.25 276.65 118.35 276.65 119.10 275.25 L 119.10 273.25 Z" fill="#f1d089" stroke="#c9a55a" stroke-width="0.25"/><path d="M 117.25 264.85 C 114.75 264.75 113.50 266.25 113.50 268.25 C 113.50 269.50 113.40 270.75 113.90 271.75 C 114.30 272.15 114.80 271.90 114.90 271.50 L 119.70 271.50 C 119.80 271.90 120.30 272.15 120.70 271.75 C 121.20 270.75 121.00 269.50 121.00 268.25 C 121.00 266.50 120.00 265.00 117.25 264.85 Z" fill="#f3d184" stroke="#caa352" stroke-width="0.25"/><path d="M 114.65 268.80 C 115.25 268.30 116.75 268.60 118.50 267.60 C 119.30 267.70 119.80 268.30 119.90 269.00 C 120.00 271.00 119.80 272.50 119.10 273.40 C 118.50 274.20 117.80 274.60 117.30 274.60 C 116.80 274.60 116.10 274.20 115.50 273.40 C 114.80 272.50 114.60 271.00 114.65 268.80 Z" fill="#fde0a2" stroke="#d4ae68" stroke-width="0.25"/><rect x="363" y="262" width="57" height="19" fill="#000"/><rect x="364" y="263" width="55" height="2" fill="#fff"/><rect x="364" y="266" width="7" height="2" fill="#00e400"/><rect x="364" y="269" width="7" height="2" fill="#00e400"/><rect x="364" y="272" width="7" height="2" fill="#00e400"/><rect x="364" y="275" width="7" height="2" fill="#00e400"/><rect x="364" y="278" width="7" height="2" fill="#00e400"/><rect x="372" y="266" width="7" height="2" fill="#00e400"/><rect x="372" y="269" width="7" height="2" fill="#00e400"/><rect x="372" y="272" width="7" height="2" fill="#00e400"/><rect x="372" y="275" width="7" height="2" fill="#00e400"/><rect x="372" y="278" width="7" height="2" fill="#00e400"/><rect x="380" y="266" width="7" height="2" fill="#00e400"/><rect x="380" y="269" width="7" height="2" fill="#00e400"/><rect x="380" y="272" width="7" height="2" fill="#00e400"/><rect x="380" y="275" width="7" height="2" fill="#00e400"/><rect x="380" y="278" width="7" height="2" fill="#00e400"/><rect x="388" y="266" width="7" height="2" fill="#00e400"/><rect x="388" y="269" width="7" height="2" fill="#00e400"/><rect x="388" y="272" width="7" height="2" fill="#00e400"/><rect x="388" y="275" width="7" height="2" fill="#00e400"/><rect x="388" y="278" width="7" height="2" fill="#00e400"/><rect x="396" y="266" width="7" height="2" fill="#00e400"/><rect x="396" y="269" width="7" height="2" fill="#00e400"/><rect x="396" y="272" width="7" height="2" fill="#00e400"/><rect x="396" y="275" width="7" height="2" fill="#00e400"/><rect x="396" y="278" width="7" height="2" fill="#00e400"/><rect x="404" y="266" width="7" height="2" fill="#00e400"/><rect x="404" y="269" width="7" height="2" fill="#00e400"/><rect x="404" y="272" width="7" height="2" fill="#00e400"/><rect x="404" y="275" width="7" height="2" fill="#00e400"/><rect x="404" y="278" width="7" height="2" fill="#00e400"/><rect x="412" y="266" width="7" height="2" fill="#00e400"/><rect x="412" y="269" width="7" height="2" fill="#00e400"/><rect x="412" y="272" width="7" height="2" fill="#00e400"/><rect x="412" y="275" width="7" height="2" fill="#00e400"/><rect x="412" y="278" width="7" height="2" fill="#00e400"/><path d="M 107.65 296.65 A 4.90 3.50 0 0 1 117.40 296.65 Z" fill="#f03a50" stroke="#e02040" stroke-width="0.35"/><path d="M 112.75 284.60 C 110.00 284.60 109.40 286.75 109.45 288.75 C 109.50 290.50 109.30 291.75 108.95 292.50 C 109.75 293.10 111.25 293.00 112.00 292.50 L 115.50 289.50 L 115.65 286.25 C 114.90 285.00 113.90 284.60 112.75 284.60 Z" fill="#a9714b" stroke="#8c5a38" stroke-width="0.25"/><path d="M 110.90 289.25 C 111.75 288.90 112.75 288.50 113.50 287.75 L 114.50 287.75 L 114.50 293.00 C 114.00 294.10 112.50 294.10 112.00 293.10 L 112.00 292.25 C 111.20 291.60 110.85 290.50 110.90 289.25 Z" fill="#f3cb7f" stroke="#c9a55a" stroke-width="0.25"/><path d="M 110.95 300.45 A 6.28 4.55 0 0 1 123.50 300.45 Z" fill="#2c9a4c" stroke="#1c7c38" stroke-width="0.35"/><path d="M 115.50 294.25 L 115.50 296.25 C 116.25 297.65 118.35 297.65 119.10 296.25 L 119.10 294.25 Z" fill="#f1d089" stroke="#c9a55a" stroke-width="0.25"/><path d="M 117.25 285.85 C 114.75 285.75 113.50 287.25 113.50 289.25 C 113.50 290.50 113.40 291.75 113.90 292.75 C 114.30 293.15 114.80 292.90 114.90 292.50 L 119.70 292.50 C 119.80 292.90 120.30 293.15 120.70 292.75 C 121.20 291.75 121.00 290.50 121.00 289.25 C 121.00 287.50 120.00 286.00 117.25 285.85 Z" fill="#f3d184" stroke="#caa352" stroke-width="0.25"/><path d="M 114.65 289.80 C 115.25 289.30 116.75 289.60 118.50 288.60 C 119.30 288.70 119.80 289.30 119.90 290.00 C 120.00 292.00 119.80 293.50 119.10 294.40 C 118.50 295.20 117.80 295.60 117.30 295.60 C 116.80 295.60 116.10 295.20 115.50 294.40 C 114.80 293.50 114.60 292.00 114.65 289.80 Z" fill="#fde0a2" stroke="#d4ae68" stroke-width="0.25"/><rect x="363" y="283" width="57" height="19" fill="#000"/><rect x="364" y="284" width="55" height="2" fill="#fff"/><rect x="364" y="287" width="7" height="2" fill="#00e400"/><rect x="364" y="290" width="7" height="2" fill="#00e400"/><rect x="364" y="293" width="7" height="2" fill="#00e400"/><rect x="364" y="296" width="7" height="2" fill="#00e400"/><rect x="364" y="299" width="7" height="2" fill="#00e400"/><rect x="372" y="287" width="7" height="2" fill="#00e400"/><rect x="372" y="290" width="7" height="2" fill="#00e400"/><rect x="372" y="293" width="7" height="2" fill="#00e400"/><rect x="372" y="296" width="7" height="2" fill="#00e400"/><rect x="372" y="299" width="7" height="2" fill="#00e400"/><rect x="380" y="287" width="7" height="2" fill="#00e400"/><rect x="380" y="290" width="7" height="2" fill="#00e400"/><rect x="380" y="293" width="7" height="2" fill="#00e400"/><rect x="380" y="296" width="7" height="2" fill="#00e400"/><rect x="380" y="299" width="7" height="2" fill="#00e400"/><rect x="388" y="287" width="7" height="2" fill="#00e400"/><rect x="388" y="290" width="7" height="2" fill="#00e400"/><rect x="388" y="293" width="7" height="2" fill="#00e400"/><rect x="388" y="296" width="7" height="2" fill="#00e400"/><rect x="388" y="299" width="7" height="2" fill="#00e400"/><rect x="396" y="287" width="7" height="2" fill="#00e400"/><rect x="396" y="290" width="7" height="2" fill="#00e400"/><rect x="396" y="293" width="7" height="2" fill="#00e400"/><rect x="396" y="296" width="7" height="2" fill="#00e400"/><rect x="396" y="299" width="7" height="2" fill="#00e400"/><rect x="404" y="287" width="7" height="2" fill="#00e400"/><rect x="404" y="290" width="7" height="2" fill="#00e400"/><rect x="404" y="293" width="7" height="2" fill="#00e400"/><rect x="404" y="296" width="7" height="2" fill="#00e400"/><rect x="404" y="299" width="7" height="2" fill="#00e400"/><rect x="412" y="287" width="7" height="2" fill="#00e400"/><rect x="412" y="290" width="7" height="2" fill="#00e400"/><rect x="412" y="293" width="7" height="2" fill="#00e400"/><rect x="412" y="296" width="7" height="2" fill="#00e400"/><rect x="412" y="299" width="7" height="2" fill="#00e400"/><path d="M 107.65 317.65 A 4.90 3.50 0 0 1 117.40 317.65 Z" fill="#f03a50" stroke="#e02040" stroke-width="0.35"/><path d="M 112.75 305.60 C 110.00 305.60 109.40 307.75 109.45 309.75 C 109.50 311.50 109.30 312.75 108.95 313.50 C 109.75 314.10 111.25 314.00 112.00 313.50 L 115.50 310.50 L 115.65 307.25 C 114.90 306.00 113.90 305.60 112.75 305.60 Z" fill="#a9714b" stroke="#8c5a38" stroke-width="0.25"/><path d="M 110.90 310.25 C 111.75 309.90 112.75 309.50 113.50 308.75 L 114.50 308.75 L 114.50 314.00 C 114.00 315.10 112.50 315.10 112.00 314.10 L 112.00 313.25 C 111.20 312.60 110.85 311.50 110.90 310.25 Z" fill="#f3cb7f" stroke="#c9a55a" stroke-width="0.25"/><path d="M 110.95 321.45 A 6.28 4.55 0 0 1 123.50 321.45 Z" fill="#2c9a4c" stroke="#1c7c38" stroke-width="0.35"/><path d="M 115.50 315.25 L 115.50 317.25 C 116.25 318.65 118.35 318.65 119.10 317.25 L 119.10 315.25 Z" fill="#f1d089" stroke="#c9a55a" stroke-width="0.25"/><path d="M 117.25 306.85 C 114.75 306.75 113.50 308.25 113.50 310.25 C 113.50 311.50 113.40 312.75 113.90 313.75 C 114.30 314.15 114.80 313.90 114.90 313.50 L 119.70 313.50 C 119.80 313.90 120.30 314.15 120.70 313.75 C 121.20 312.75 121.00 311.50 121.00 310.25 C 121.00 308.50 120.00 307.00 117.25 306.85 Z" fill="#f3d184" stroke="#caa352" stroke-width="0.25"/><path d="M 114.65 310.80 C 115.25 310.30 116.75 310.60 118.50 309.60 C 119.30 309.70 119.80 310.30 119.90 311.00 C 120.00 313.00 119.80 314.50 119.10 315.40 C 118.50 316.20 117.80 316.60 117.30 316.60 C 116.80 316.60 116.10 316.20 115.50 315.40 C 114.80 314.50 114.60 313.00 114.65 310.80 Z" fill="#fde0a2" stroke="#d4ae68" stroke-width="0.25"/><rect x="363" y="304" width="57" height="19" fill="#000"/><rect x="364" y="305" width="55" height="2" fill="#fff"/><rect x="364" y="308" width="7" height="2" fill="#00e400"/><rect x="364" y="311" width="7" height="2" fill="#00e400"/><rect x="364" y="314" width="7" height="2" fill="#00e400"/><rect x="364" y="317" width="7" height="2" fill="#00e400"/><rect x="364" y="320" width="7" height="2" fill="#00e400"/><rect x="372" y="308" width="7" height="2" fill="#00e400"/><rect x="372" y="311" width="7" height="2" fill="#00e400"/><rect x="372" y="314" width="7" height="2" fill="#00e400"/><rect x="372" y="317" width="7" height="2" fill="#00e400"/><rect x="372" y="320" width="7" height="2" fill="#00e400"/><rect x="380" y="308" width="7" height="2" fill="#00e400"/><rect x="380" y="311" width="7" height="2" fill="#00e400"/><rect x="380" y="314" width="7" height="2" fill="#00e400"/><rect x="380" y="317" width="7" height="2" fill="#00e400"/><rect x="380" y="320" width="7" height="2" fill="#00e400"/><rect x="388" y="308" width="7" height="2" fill="#00e400"/><rect x="388" y="311" width="7" height="2" fill="#00e400"/><rect x="388" y="314" width="7" height="2" fill="#00e400"/><rect x="388" y="317" width="7" height="2" fill="#00e400"/><rect x="388" y="320" width="7" height="2" fill="#00e400"/><rect x="396" y="308" width="7" height="2" fill="#00e400"/><rect x="396" y="311" width="7" height="2" fill="#00e400"/><rect x="396" y="314" width="7" height="2" fill="#00e400"/><rect x="396" y="317" width="7" height="2" fill="#00e400"/><rect x="396" y="320" width="7" height="2" fill="#00e400"/><rect x="404" y="308" width="7" height="2" fill="#00e400"/><rect x="404" y="311" width="7" height="2" fill="#00e400"/><rect x="404" y="314" width="7" height="2" fill="#00e400"/><rect x="404" y="317" width="7" height="2" fill="#00e400"/><rect x="404" y="320" width="7" height="2" fill="#00e400"/><rect x="412" y="308" width="7" height="2" fill="#00e400"/><rect x="412" y="311" width="7" height="2" fill="#00e400"/><rect x="412" y="314" width="7" height="2" fill="#00e400"/><rect x="412" y="317" width="7" height="2" fill="#00e400"/><rect x="412" y="320" width="7" height="2" fill="#00e400"/><path d="M 107.65 338.65 A 4.90 3.50 0 0 1 117.40 338.65 Z" fill="#f03a50" stroke="#e02040" stroke-width="0.35"/><path d="M 112.75 326.60 C 110.00 326.60 109.40 328.75 109.45 330.75 C 109.50 332.50 109.30 333.75 108.95 334.50 C 109.75 335.10 111.25 335.00 112.00 334.50 L 115.50 331.50 L 115.65 328.25 C 114.90 327.00 113.90 326.60 112.75 326.60 Z" fill="#a9714b" stroke="#8c5a38" stroke-width="0.25"/><path d="M 110.90 331.25 C 111.75 330.90 112.75 330.50 113.50 329.75 L 114.50 329.75 L 114.50 335.00 C 114.00 336.10 112.50 336.10 112.00 335.10 L 112.00 334.25 C 111.20 333.60 110.85 332.50 110.90 331.25 Z" fill="#f3cb7f" stroke="#c9a55a" stroke-width="0.25"/><path d="M 110.95 342.45 A 6.28 4.55 0 0 1 123.50 342.45 Z" fill="#2c9a4c" stroke="#1c7c38" stroke-width="0.35"/><path d="M 115.50 336.25 L 115.50 338.25 C 116.25 339.65 118.35 339.65 119.10 338.25 L 119.10 336.25 Z" fill="#f1d089" stroke="#c9a55a" stroke-width="0.25"/><path d="M 117.25 327.85 C 114.75 327.75 113.50 329.25 113.50 331.25 C 113.50 332.50 113.40 333.75 113.90 334.75 C 114.30 335.15 114.80 334.90 114.90 334.50 L 119.70 334.50 C 119.80 334.90 120.30 335.15 120.70 334.75 C 121.20 333.75 121.00 332.50 121.00 331.25 C 121.00 329.50 120.00 328.00 117.25 327.85 Z" fill="#f3d184" stroke="#caa352" stroke-width="0.25"/><path d="M 114.65 331.80 C 115.25 331.30 116.75 331.60 118.50 330.60 C 119.30 330.70 119.80 331.30 119.90 332.00 C 120.00 334.00 119.80 335.50 119.10 336.40 C 118.50 337.20 117.80 337.60 117.30 337.60 C 116.80 337.60 116.10 337.20 115.50 336.40 C 114.80 335.50 114.60 334.00 114.65 331.80 Z" fill="#fde0a2" stroke="#d4ae68" stroke-width="0.25"/><rect x="363" y="325" width="57" height="19" fill="#000"/><rect x="364" y="326" width="55" height="2" fill="#fff"/><rect x="364" y="329" width="7" height="2" fill="#00e400"/><rect x="364" y="332" width="7" height="2" fill="#00e400"/><rect x="364" y="335" width="7" height="2" fill="#00e400"/><rect x="364" y="338" width="7" height="2" fill="#00e400"/><rect x="364" y="341" width="7" height="2" fill="#00e400"/><rect x="372" y="329" width="7" height="2" fill="#00e400"/><rect x="372" y="332" width="7" height="2" fill="#00e400"/><rect x="372" y="335" width="7" height="2" fill="#00e400"/><rect x="372" y="338" width="7" height="2" fill="#00e400"/><rect x="372" y="341" width="7" height="2" fill="#00e400"/><rect x="380" y="329" width="7" height="2" fill="#00e400"/><rect x="380" y="332" width="7" height="2" fill="#00e400"/><rect x="380" y="335" width="7" height="2" fill="#00e400"/><rect x="380" y="338" width="7" height="2" fill="#00e400"/><rect x="380" y="341" width="7" height="2" fill="#00e400"/><rect x="388" y="329" width="7" height="2" fill="#00e400"/><rect x="388" y="332" width="7" height="2" fill="#00e400"/><rect x="388" y="335" width="7" height="2" fill="#00e400"/><rect x="388" y="338" width="7" height="2" fill="#00e400"/><rect x="388" y="341" width="7" height="2" fill="#00e400"/><rect x="396" y="329" width="7" height="2" fill="#00e400"/><rect x="396" y="332" width="7" height="2" fill="#00e400"/><rect x="396" y="335" width="7" height="2" fill="#00e400"/><rect x="396" y="338" width="7" height="2" fill="#00e400"/><rect x="396" y="341" width="7" height="2" fill="#00e400"/><rect x="404" y="329" width="7" height="2" fill="#00e400"/><rect x="404" y="332" width="7" height="2" fill="#00e400"/><rect x="404" y="335" width="7" height="2" fill="#00e400"/><rect x="404" y="338" width="7" height="2" fill="#00e400"/><rect x="404" y="341" width="7" height="2" fill="#00e400"/><rect x="412" y="329" width="7" height="2" fill="#00e400"/><rect x="412" y="332" width="7" height="2" fill="#00e400"/><rect x="412" y="335" width="7" height="2" fill="#00e400"/><rect x="412" y="338" width="7" height="2" fill="#00e400"/><rect x="412" y="341" width="7" height="2" fill="#00e400"/><path d="M 107.65 359.65 A 4.90 3.50 0 0 1 117.40 359.65 Z" fill="#f03a50" stroke="#e02040" stroke-width="0.35"/><path d="M 112.75 347.60 C 110.00 347.60 109.40 349.75 109.45 351.75 C 109.50 353.50 109.30 354.75 108.95 355.50 C 109.75 356.10 111.25 356.00 112.00 355.50 L 115.50 352.50 L 115.65 349.25 C 114.90 348.00 113.90 347.60 112.75 347.60 Z" fill="#a9714b" stroke="#8c5a38" stroke-width="0.25"/><path d="M 110.90 352.25 C 111.75 351.90 112.75 351.50 113.50 350.75 L 114.50 350.75 L 114.50 356.00 C 114.00 357.10 112.50 357.10 112.00 356.10 L 112.00 355.25 C 111.20 354.60 110.85 353.50 110.90 352.25 Z" fill="#f3cb7f" stroke="#c9a55a" stroke-width="0.25"/><path d="M 110.95 363.45 A 6.28 4.55 0 0 1 123.50 363.45 Z" fill="#2c9a4c" stroke="#1c7c38" stroke-width="0.35"/><path d="M 115.50 357.25 L 115.50 359.25 C 116.25 360.65 118.35 360.65 119.10 359.25 L 119.10 357.25 Z" fill="#f1d089" stroke="#c9a55a" stroke-width="0.25"/><path d="M 117.25 348.85 C 114.75 348.75 113.50 350.25 113.50 352.25 C 113.50 353.50 113.40 354.75 113.90 355.75 C 114.30 356.15 114.80 355.90 114.90 355.50 L 119.70 355.50 C 119.80 355.90 120.30 356.15 120.70 355.75 C 121.20 354.75 121.00 353.50 121.00 352.25 C 121.00 350.50 120.00 349.00 117.25 348.85 Z" fill="#f3d184" stroke="#caa352" stroke-width="0.25"/><path d="M 114.65 352.80 C 115.25 352.30 116.75 352.60 118.50 351.60 C 119.30 351.70 119.80 352.30 119.90 353.00 C 120.00 355.00 119.80 356.50 119.10 357.40 C 118.50 358.20 117.80 358.60 117.30 358.60 C 116.80 358.60 116.10 358.20 115.50 357.40 C 114.80 356.50 114.60 355.00 114.65 352.80 Z" fill="#fde0a2" stroke="#d4ae68" stroke-width="0.25"/><rect x="363" y="346" width="57" height="19" fill="#000"/><rect x="364" y="347" width="55" height="2" fill="#fff"/><rect x="364" y="350" width="7" height="2" fill="#00e400"/><rect x="364" y="353" width="7" height="2" fill="#00e400"/><rect x="364" y="356" width="7" height="2" fill="#00e400"/><rect x="364" y="359" width="7" height="2" fill="#00e400"/><rect x="364" y="362" width="7" height="2" fill="#00e400"/><rect x="372" y="350" width="7" height="2" fill="#00e400"/><rect x="372" y="353" width="7" height="2" fill="#00e400"/><rect x="372" y="356" width="7" height="2" fill="#00e400"/><rect x="372" y="359" width="7" height="2" fill="#00e400"/><rect x="372" y="362" width="7" height="2" fill="#00e400"/><rect x="380" y="350" width="7" height="2" fill="#00e400"/><rect x="380" y="353" width="7" height="2" fill="#00e400"/><rect x="380" y="356" width="7" height="2" fill="#00e400"/><rect x="380" y="359" width="7" height="2" fill="#00e400"/><rect x="380" y="362" width="7" height="2" fill="#00e400"/><rect x="388" y="350" width="7" height="2" fill="#00e400"/><rect x="388" y="353" width="7" height="2" fill="#00e400"/><rect x="388" y="356" width="7" height="2" fill="#00e400"/><rect x="388" y="359" width="7" height="2" fill="#00e400"/><rect x="388" y="362" width="7" height="2" fill="#00e400"/><rect x="396" y="350" width="7" height="2" fill="#00e400"/><rect x="396" y="353" width="7" height="2" fill="#00e400"/><rect x="396" y="356" width="7" height="2" fill="#00e400"/><rect x="396" y="359" width="7" height="2" fill="#00e400"/><rect x="396" y="362" width="7" height="2" fill="#00e400"/><rect x="404" y="350" width="7" height="2" fill="#00e400"/><rect x="404" y="353" width="7" height="2" fill="#00e400"/><rect x="404" y="356" width="7" height="2" fill="#00e400"/><rect x="404" y="359" width="7" height="2" fill="#00e400"/><rect x="404" y="362" width="7" height="2" fill="#00e400"/><rect x="412" y="350" width="7" height="2" fill="#00e400"/><rect x="412" y="353" width="7" height="2" fill="#00e400"/><rect x="412" y="356" width="7" height="2" fill="#00e400"/><rect x="412" y="359" width="7" height="2" fill="#00e400"/><rect x="412" y="362" width="7" height="2" fill="#00e400"/><path d="M 107.65 380.65 A 4.90 3.50 0 0 1 117.40 380.65 Z" fill="#f03a50" stroke="#e02040" stroke-width="0.35"/><path d="M 112.75 368.60 C 110.00 368.60 109.40 370.75 109.45 372.75 C 109.50 374.50 109.30 375.75 108.95 376.50 C 109.75 377.10 111.25 377.00 112.00 376.50 L 115.50 373.50 L 115.65 370.25 C 114.90 369.00 113.90 368.60 112.75 368.60 Z" fill="#a9714b" stroke="#8c5a38" stroke-width="0.25"/><path d="M 110.90 373.25 C 111.75 372.90 112.75 372.50 113.50 371.75 L 114.50 371.75 L 114.50 377.00 C 114.00 378.10 112.50 378.10 112.00 377.10 L 112.00 376.25 C 111.20 375.60 110.85 374.50 110.90 373.25 Z" fill="#f3cb7f" stroke="#c9a55a" stroke-width="0.25"/><path d="M 110.95 384.45 A 6.28 4.55 0 0 1 123.50 384.45 Z" fill="#2c9a4c" stroke="#1c7c38" stroke-width="0.35"/><path d="M 115.50 378.25 L 115.50 380.25 C 116.25 381.65 118.35 381.65 119.10 380.25 L 119.10 378.25 Z" fill="#f1d089" stroke="#c9a55a" stroke-width="0.25"/><path d="M 117.25 369.85 C 114.75 369.75 113.50 371.25 113.50 373.25 C 113.50 374.50 113.40 375.75 113.90 376.75 C 114.30 377.15 114.80 376.90 114.90 376.50 L 119.70 376.50 C 119.80 376.90 120.30 377.15 120.70 376.75 C 121.20 375.75 121.00 374.50 121.00 373.25 C 121.00 371.50 120.00 370.00 117.25 369.85 Z" fill="#f3d184" stroke="#caa352" stroke-width="0.25"/><path d="M 114.65 373.80 C 115.25 373.30 116.75 373.60 118.50 372.60 C 119.30 372.70 119.80 373.30 119.90 374.00 C 120.00 376.00 119.80 377.50 119.10 378.40 C 118.50 379.20 117.80 379.60 117.30 379.60 C 116.80 379.60 116.10 379.20 115.50 378.40 C 114.80 377.50 114.60 376.00 114.65 373.80 Z" fill="#fde0a2" stroke="#d4ae68" stroke-width="0.25"/><rect x="363" y="367" width="57" height="19" fill="#000"/><rect x="364" y="368" width="55" height="2" fill="#fff"/><rect x="364" y="371" width="7" height="2" fill="#00e400"/><rect x="364" y="374" width="7" height="2" fill="#00e400"/><rect x="364" y="377" width="7" height="2" fill="#00e400"/><rect x="364" y="380" width="7" height="2" fill="#00e400"/><rect x="364" y="383" width="7" height="2" fill="#00e400"/><rect x="372" y="371" width="7" height="2" fill="#00e400"/><rect x="372" y="374" width="7" height="2" fill="#00e400"/><rect x="372" y="377" width="7" height="2" fill="#00e400"/><rect x="372" y="380" width="7" height="2" fill="#00e400"/><rect x="372" y="383" width="7" height="2" fill="#00e400"/><rect x="380" y="371" width="7" height="2" fill="#00e400"/><rect x="380" y="374" width="7" height="2" fill="#00e400"/><rect x="380" y="377" width="7" height="2" fill="#00e400"/><rect x="380" y="380" width="7" height="2" fill="#00e400"/><rect x="380" y="383" width="7" height="2" fill="#00e400"/><rect x="388" y="371" width="7" height="2" fill="#00e400"/><rect x="388" y="374" width="7" height="2" fill="#00e400"/><rect x="388" y="377" width="7" height="2" fill="#00e400"/><rect x="388" y="380" width="7" height="2" fill="#00e400"/><rect x="388" y="383" width="7" height="2" fill="#00e400"/><rect x="396" y="371" width="7" height="2" fill="#00e400"/><rect x="396" y="374" width="7" height="2" fill="#00e400"/><rect x="396" y="377" width="7" height="2" fill="#00e400"/><rect x="396" y="380" width="7" height="2" fill="#00e400"/><rect x="396" y="383" width="7" height="2" fill="#00e400"/><rect x="404" y="371" width="7" height="2" fill="#00e400"/><rect x="404" y="374" width="7" height="2" fill="#00e400"/><rect x="404" y="377" width="7" height="2" fill="#00e400"/><rect x="404" y="380" width="7" height="2" fill="#00e400"/><rect x="404" y="383" width="7" height="2" fill="#00e400"/><rect x="412" y="371" width="7" height="2" fill="#00e400"/><rect x="412" y="374" width="7" height="2" fill="#00e400"/><rect x="412" y="377" width="7" height="2" fill="#00e400"/><rect x="412" y="380" width="7" height="2" fill="#00e400"/><rect x="412" y="383" width="7" height="2" fill="#00e400"/><path d="M 107.65 401.65 A 4.90 3.50 0 0 1 117.40 401.65 Z" fill="#f03a50" stroke="#e02040" stroke-width="0.35"/><path d="M 112.75 389.60 C 110.00 389.60 109.40 391.75 109.45 393.75 C 109.50 395.50 109.30 396.75 108.95 397.50 C 109.75 398.10 111.25 398.00 112.00 397.50 L 115.50 394.50 L 115.65 391.25 C 114.90 390.00 113.90 389.60 112.75 389.60 Z" fill="#a9714b" stroke="#8c5a38" stroke-width="0.25"/><path d="M 110.90 394.25 C 111.75 393.90 112.75 393.50 113.50 392.75 L 114.50 392.75 L 114.50 398.00 C 114.00 399.10 112.50 399.10 112.00 398.10 L 112.00 397.25 C 111.20 396.60 110.85 395.50 110.90 394.25 Z" fill="#f3cb7f" stroke="#c9a55a" stroke-width="0.25"/><path d="M 110.95 405.45 A 6.28 4.55 0 0 1 123.50 405.45 Z" fill="#2c9a4c" stroke="#1c7c38" stroke-width="0.35"/><path d="M 115.50 399.25 L 115.50 401.25 C 116.25 402.65 118.35 402.65 119.10 401.25 L 119.10 399.25 Z" fill="#f1d089" stroke="#c9a55a" stroke-width="0.25"/><path d="M 117.25 390.85 C 114.75 390.75 113.50 392.25 113.50 394.25 C 113.50 395.50 113.40 396.75 113.90 397.75 C 114.30 398.15 114.80 397.90 114.90 397.50 L 119.70 397.50 C 119.80 397.90 120.30 398.15 120.70 397.75 C 121.20 396.75 121.00 395.50 121.00 394.25 C 121.00 392.50 120.00 391.00 117.25 390.85 Z" fill="#f3d184" stroke="#caa352" stroke-width="0.25"/><path d="M 114.65 394.80 C 115.25 394.30 116.75 394.60 118.50 393.60 C 119.30 393.70 119.80 394.30 119.90 395.00 C 120.00 397.00 119.80 398.50 119.10 399.40 C 118.50 400.20 117.80 400.60 117.30 400.60 C 116.80 400.60 116.10 400.20 115.50 399.40 C 114.80 398.50 114.60 397.00 114.65 394.80 Z" fill="#fde0a2" stroke="#d4ae68" stroke-width="0.25"/><rect x="363" y="388" width="57" height="19" fill="#000"/><rect x="364" y="389" width="55" height="2" fill="#fff"/><rect x="364" y="392" width="7" height="2" fill="#00e400"/><rect x="364" y="395" width="7" height="2" fill="#00e400"/><rect x="364" y="398" width="7" height="2" fill="#00e400"/><rect x="364" y="401" width="7" height="2" fill="#00e400"/><rect x="364" y="404" width="7" height="2" fill="#00e400"/><rect x="372" y="392" width="7" height="2" fill="#00e400"/><rect x="372" y="395" width="7" height="2" fill="#00e400"/><rect x="372" y="398" width="7" height="2" fill="#00e400"/><rect x="372" y="401" width="7" height="2" fill="#00e400"/><rect x="372" y="404" width="7" height="2" fill="#00e400"/><rect x="380" y="392" width="7" height="2" fill="#00e400"/><rect x="380" y="395" width="7" height="2" fill="#00e400"/><rect x="380" y="398" width="7" height="2" fill="#00e400"/><rect x="380" y="401" width="7" height="2" fill="#00e400"/><rect x="380" y="404" width="7" height="2" fill="#00e400"/><rect x="388" y="392" width="7" height="2" fill="#00e400"/><rect x="388" y="395" width="7" height="2" fill="#00e400"/><rect x="388" y="398" width="7" height="2" fill="#00e400"/><rect x="388" y="401" width="7" height="2" fill="#00e400"/><rect x="388" y="404" width="7" height="2" fill="#00e400"/><rect x="396" y="392" width="7" height="2" fill="#00e400"/><rect x="396" y="395" width="7" height="2" fill="#00e400"/><rect x="396" y="398" width="7" height="2" fill="#00e400"/><rect x="396" y="401" width="7" height="2" fill="#00e400"/><rect x="396" y="404" width="7" height="2" fill="#00e400"/><rect x="404" y="392" width="7" height="2" fill="#00e400"/><rect x="404" y="395" width="7" height="2" fill="#00e400"/><rect x="404" y="398" width="7" height="2" fill="#00e400"/><rect x="404" y="401" width="7" height="2" fill="#00e400"/><rect x="404" y="404" width="7" height="2" fill="#00e400"/><rect x="412" y="392" width="7" height="2" fill="#00e400"/><rect x="412" y="395" width="7" height="2" fill="#00e400"/><rect x="412" y="398" width="7" height="2" fill="#00e400"/><rect x="412" y="401" width="7" height="2" fill="#00e400"/><rect x="412" y="404" width="7" height="2" fill="#00e400"/></svg><div class="btn" style="left:558px;top:60px;width:132px;height:27px"></div><div class="lbl" style="left:590px;top:67px;">Нов</div><div class="btn" style="left:558px;top:96px;width:132px;height:27px"></div><div class="lbl" style="left:590px;top:103px;">Редактирай</div><div class="btn" style="left:558px;top:131px;width:132px;height:27px"></div><div class="lbl" style="left:590px;top:138px;">Премахни</div><div class="btn" style="left:558px;top:198px;width:132px;height:27px"></div><div class="lbl" style="left:590px;top:205px;">Часове</div><div class="btn" style="left:558px;top:234px;width:132px;height:27px"></div><div class="lbl" style="left:590px;top:241px;">Условия</div><svg class="abs" style="left:543px;top:55px;" width="165" height="215" viewBox="550 190 165 215"><circle cx="582" cy="208.500" r="7.300" fill="#3cc03c" stroke="#6cd46c" stroke-width="1" stroke-dasharray="1.200 1"/><path d="M582 204.300v8.400M577.800 208.500h8.400" stroke="#fff" stroke-width="2.400"/><path d="M 574.15 248.65 A 4.90 3.50 0 0 1 583.90 248.65 Z" fill="#f03a50" stroke="#e02040" stroke-width="0.35"/><path d="M 579.25 236.60 C 576.50 236.60 575.90 238.75 575.95 240.75 C 576.00 242.50 575.80 243.75 575.45 244.50 C 576.25 245.10 577.75 245.00 578.50 244.50 L 582.00 241.50 L 582.15 238.25 C 581.40 237.00 580.40 236.60 579.25 236.60 Z" fill="#a9714b" stroke="#8c5a38" stroke-width="0.25"/><path d="M 577.40 241.25 C 578.25 240.90 579.25 240.50 580.00 239.75 L 581.00 239.75 L 581.00 245.00 C 580.50 246.10 579.00 246.10 578.50 245.10 L 578.50 244.25 C 577.70 243.60 577.35 242.50 577.40 241.25 Z" fill="#f3cb7f" stroke="#c9a55a" stroke-width="0.25"/><path d="M 577.45 252.45 A 6.28 4.55 0 0 1 590.00 252.45 Z" fill="#2c9a4c" stroke="#1c7c38" stroke-width="0.35"/><path d="M 582.00 246.25 L 582.00 248.25 C 582.75 249.65 584.85 249.65 585.60 248.25 L 585.60 246.25 Z" fill="#f1d089" stroke="#c9a55a" stroke-width="0.25"/><path d="M 583.75 237.85 C 581.25 237.75 580.00 239.25 580.00 241.25 C 580.00 242.50 579.90 243.75 580.40 244.75 C 580.80 245.15 581.30 244.90 581.40 244.50 L 586.20 244.50 C 586.30 244.90 586.80 245.15 587.20 244.75 C 587.70 243.75 587.50 242.50 587.50 241.25 C 587.50 239.50 586.50 238.00 583.75 237.85 Z" fill="#f3d184" stroke="#caa352" stroke-width="0.25"/><path d="M 581.15 241.80 C 581.75 241.30 583.25 241.60 585.00 240.60 C 585.80 240.70 586.30 241.30 586.40 242.00 C 586.50 244.00 586.30 245.50 585.60 246.40 C 585.00 247.20 584.30 247.60 583.80 247.60 C 583.30 247.60 582.60 247.20 582.00 246.40 C 581.30 245.50 581.10 244.00 581.15 241.80 Z" fill="#fde0a2" stroke="#d4ae68" stroke-width="0.25"/><circle cx="582" cy="279" r="7.800" fill="#f24444"/><rect x="577.300" y="277.300" width="9.400" height="3.400" fill="#fff"/><rect x="578" y="342" width="11" height="11.500" fill="#2492ff"/><rect x="575" y="338.800" width="11" height="11.500" fill="#f0106e"/><circle cx="582" cy="382" r="7.200" fill="#fff" stroke="#4a6aa8" stroke-width="1.200"/><path d="M582 377.500v5l3 2.500" fill="none" stroke="#4a6aa8" stroke-width="1.200"/><rect x="555" y="328" width="149.500" height="37.500" fill="none" stroke="#e81c2c" stroke-width="2.400"/></svg></div><div class="abs" id="d2" style="left:19px;top:387px;width:883px;height:546px;background:#f0f0f0;border:1px solid #1883d7;box-shadow:0 4px 14px 1px rgba(0,0,0,.28)"><div class="abs" style="left:0;top:0;width:881px;height:30px;background:#fff"></div><svg class="abs" style="left:7px;top:6px;" width="18" height="16" viewBox="27 394 18 16"><rect x="28.500" y="395.800" width="14.300" height="11.800" fill="#f4f4f4" stroke="#9aa0a8" stroke-width="1"/><defs><linearGradient id="tg" x1="0" y1="0" x2="0" y2="1"><stop offset="0" stop-color="#4a78b8"/><stop offset="1" stop-color="#3c9a5c"/></linearGradient></defs><rect x="30.300" y="398" width="5.200" height="8" fill="url(#tg)"/><rect x="36.500" y="398" width="2.200" height="8" fill="#d4dae0"/><rect x="39.500" y="398" width="2" height="2" fill="#c4ccd4"/></svg><div class="t" style="left:29px;top:7.600000000000023px;font-size:11.500px;color:#000">Часове за клас</div><svg class="abs" style="left:755px;top:4px;" width="120" height="20" viewBox="775 392 120 20"><path d="M782 402.500h10" stroke="#c4c4c4" stroke-width="1"/><rect x="827.500" y="397.500" width="9" height="9" fill="none" stroke="#000" stroke-width="1.100"/><path d="M873 397l10 10M883 397l-10 10" stroke="#000" stroke-width="1.150"/></svg><svg class="abs" style="left:8px;top:30px;" width="50" height="50" viewBox="28 418 50 50"><path d="M 31.39 453.63 A 12.84 9.17 0 0 1 56.94 453.63 Z" fill="#f4a3a3" stroke="#cc3030" stroke-width="0.92"/><path d="M 44.76 422.06 C 37.55 422.06 35.98 427.69 36.11 432.94 C 36.24 437.52 35.72 440.80 34.80 442.76 C 36.90 444.33 40.83 444.07 42.79 442.76 L 51.96 434.90 L 52.35 426.38 C 50.39 423.11 47.77 422.06 44.76 422.06 Z" fill="#a9714b" stroke="#8c5a38" stroke-width="0.66"/><path d="M 39.91 434.25 C 42.13 433.33 44.76 432.28 46.72 430.31 L 49.34 430.31 L 49.34 444.07 C 48.03 446.95 44.10 446.95 42.79 444.33 L 42.79 442.11 C 40.69 440.40 39.78 437.52 39.91 434.25 Z" fill="#f3cb7f" stroke="#c9a55a" stroke-width="0.66"/><path d="M 40.04 463.59 A 16.44 11.92 0 0 1 72.92 463.59 Z" fill="#b4dfb8" stroke="#2fa048" stroke-width="0.92"/><path d="M 51.96 447.35 L 51.96 452.59 C 53.92 456.25 59.43 456.25 61.39 452.59 L 61.39 447.35 Z" fill="#f1d089" stroke="#c9a55a" stroke-width="0.66"/><path d="M 56.55 425.34 C 50.00 425.07 46.72 429.00 46.72 434.25 C 46.72 437.52 46.46 440.80 47.77 443.42 C 48.82 444.46 50.13 443.81 50.39 442.76 L 62.96 442.76 C 63.23 443.81 64.54 444.46 65.58 443.42 C 66.89 440.80 66.37 437.52 66.37 434.25 C 66.37 429.66 63.75 425.73 56.55 425.34 Z" fill="#f3d184" stroke="#caa352" stroke-width="0.66"/><path d="M 49.73 435.69 C 51.30 434.38 55.23 435.16 59.82 432.54 C 61.92 432.80 63.23 434.38 63.49 436.21 C 63.75 441.45 63.23 445.38 61.39 447.74 C 59.82 449.83 57.99 450.88 56.68 450.88 C 55.37 450.88 53.53 449.83 51.96 447.74 C 50.13 445.38 49.60 441.45 49.73 435.69 Z" fill="#fde0a2" stroke="#d4ae68" stroke-width="0.66"/></svg><div class="t" style="left:62px;top:39px;font-size:14px;font-weight:bold;line-height:16px">5 а</div><div class="lbl" style="left:62px;top:63px;">5 а</div><div class="abs" style="left:6px;top:79px;width:870px;height:411px;background:#fff;border:1px solid #828790"></div><div class="abs" style="left:7px;top:80px;width:741px;height:24px;background:#f0f0f0;border-bottom:1px solid #a0a0a0"></div><div class="abs" style="left:157px;top:80px;width:1px;height:24px;background:#a0a0a0"></div><div class="abs" style="left:317px;top:80px;width:1px;height:24px;background:#a0a0a0"></div><div class="abs" style="left:447px;top:80px;width:1px;height:24px;background:#a0a0a0"></div><div class="abs" style="left:497px;top:80px;width:1px;height:24px;background:#a0a0a0"></div><div class="abs" style="left:557px;top:80px;width:1px;height:24px;background:#a0a0a0"></div><div class="abs" style="left:647px;top:80px;width:1px;height:24px;background:#a0a0a0"></div><div class="abs" style="left:697px;top:80px;width:1px;height:24px;background:#a0a0a0"></div><div class="abs" style="left:747px;top:80px;width:1px;height:24px;background:#a0a0a0"></div><div class="lbl" style="left:13px;top:86px;">Предмет</div><div class="lbl" style="left:163px;top:86px;">Учител</div><div class="lbl" style="left:323px;top:86px;">Клас</div><div class="lbl" style="left:453px;top:86px;">Брой</div><div class="lbl" style="left:503px;top:86px;">Дължина</div><div class="lbl" style="left:563px;top:86px;">Класни стаи</div><div class="lbl" style="left:653px;top:86px;">Седм</div><div class="lbl" style="left:703px;top:86px;">Срок</div><svg class="abs" style="left:140px;top:86px;" width="10" height="14" viewBox="0 0 10 14"><path d="M2 12.500L6 1.500L8.500 12.500Z" fill="#fbfbfb"/><path d="M2 12.500L6 1.500" stroke="#a8a8a8" stroke-width=".9"/><path d="M6 1.500L8.500 12.500H2" fill="none" stroke="#fff" stroke-width=".9"/></svg><div class="abs" style="left:12px;top:105px;width:736px;height:26px;background:#f5f5f5"></div><div class="abs" style="left:14px;top:107px;width:22px;height:22px;background:linear-gradient(to bottom,#b4ff8c,#78f03c 45%);font-size:11px;line-height:24px;text-align:center;padding-right:1px;color:#000;white-space:nowrap;overflow:hidden">БЕЛ</div><div class="lbl" style="left:63px;top:111px;">Български ез<span style="letter-spacing:.9px">...</span></div><div class="lbl" style="left:163px;top:111px;">Тестов Гошева</div><div class="lbl" style="left:323px;top:111px;">5 а</div><div class="lbl" style="left:455px;top:111px;">5</div><div class="lbl" style="left:505px;top:111px;">1</div><div class="abs" style="left:14px;top:133px;width:22px;height:22px;background:linear-gradient(to bottom,#50e050,#00c000 45%);font-size:11px;line-height:24px;text-align:center;padding-right:1px;color:#000;white-space:nowrap;overflow:hidden">ГИ-</div><div class="lbl" style="left:63px;top:137px;">География и <span style="letter-spacing:.9px">...</span></div><div class="lbl" style="left:163px;top:137px;">Тестов Петрова</div><div class="lbl" style="left:323px;top:137px;">5 а</div><div class="lbl" style="left:455px;top:137px;">2</div><div class="lbl" style="left:505px;top:137px;">1</div><div class="abs" style="left:12px;top:157px;width:736px;height:26px;background:#f5f5f5"></div><div class="abs" style="left:14px;top:159px;width:22px;height:22px;background:linear-gradient(to bottom,#c4ffc4,#8cf68c 45%);font-size:11px;line-height:24px;text-align:center;padding-right:1px;color:#000;white-space:nowrap;overflow:hidden">ИзИ</div><div class="lbl" style="left:63px;top:163px;">Изобразител<span style="letter-spacing:.9px">...</span></div><div class="lbl" style="left:163px;top:163px;">Тестов Асенов</div><div class="lbl" style="left:323px;top:163px;">5 а</div><div class="lbl" style="left:455px;top:163px;">2</div><div class="lbl" style="left:505px;top:163px;">1</div><div class="abs" style="left:14px;top:185px;width:22px;height:22px;background:linear-gradient(to bottom,#ffae64,#ff8008 45%);font-size:11px;line-height:24px;text-align:center;padding-right:1px;color:#000;white-space:nowrap;overflow:hidden">ИТ-</div><div class="lbl" style="left:63px;top:189px;">Информацион<span style="letter-spacing:.9px">...</span></div><div class="lbl" style="left:163px;top:189px;">Тестов Стефанова</div><div class="lbl" style="left:323px;top:189px;">5 а</div><div class="lbl" style="left:455px;top:189px;">1</div><div class="lbl" style="left:505px;top:189px;">1</div><div class="abs" style="left:12px;top:209px;width:736px;height:26px;background:#f5f5f5"></div><div class="abs" style="left:14px;top:211px;width:22px;height:22px;background:linear-gradient(to bottom,#7cff7c,#28f028 45%);font-size:11px;line-height:24px;text-align:center;padding-right:1px;color:#000;white-space:nowrap;overflow:hidden">ИЦ-</div><div class="lbl" style="left:63px;top:215px;">История и ци<span style="letter-spacing:.9px">...</span></div><div class="lbl" style="left:163px;top:215px;">Тестов Димитрова</div><div class="lbl" style="left:323px;top:215px;">5 а</div><div class="lbl" style="left:455px;top:215px;">2</div><div class="lbl" style="left:505px;top:215px;">1</div><div class="abs" style="left:14px;top:237px;width:22px;height:22px;background:linear-gradient(to bottom,#5050ff,#0000f4 45%);font-size:11px;line-height:24px;text-align:center;padding-right:1px;color:#000;white-space:nowrap;overflow:hidden">Мат</div><div class="lbl" style="left:63px;top:241px;">Математика -<span style="letter-spacing:.9px">...</span></div><div class="lbl" style="left:163px;top:241px;">Тестов Божкова</div><div class="lbl" style="left:323px;top:241px;">5 а</div><div class="lbl" style="left:455px;top:241px;">4</div><div class="lbl" style="left:505px;top:241px;">1</div><div class="abs" style="left:12px;top:261px;width:736px;height:26px;background:#f5f5f5"></div><div class="abs" style="left:14px;top:263px;width:22px;height:22px;background:linear-gradient(to bottom,#ff5a5a,#fa0000 45%);font-size:11px;line-height:24px;text-align:center;padding-right:1px;color:#000;white-space:nowrap;overflow:hidden">Мз-</div><div class="lbl" style="left:63px;top:267px;">Музика - ООП</div><div class="lbl" style="left:163px;top:267px;">Тестов Красимиров</div><div class="lbl" style="left:323px;top:267px;">5 а</div><div class="lbl" style="left:455px;top:267px;">2</div><div class="lbl" style="left:505px;top:267px;">1</div><div class="abs" style="left:14px;top:289px;width:22px;height:22px;background:linear-gradient(to bottom,#f4ffd0,#dcff94 45%);font-size:11px;line-height:24px;text-align:center;padding-right:1px;color:#000;white-space:nowrap;overflow:hidden">РЕ-</div><div class="lbl" style="left:63px;top:293px;">Руски език - <span style="letter-spacing:.9px">...</span></div><div class="lbl" style="left:163px;top:293px;">Тестов Лалева</div><div class="lbl" style="left:323px;top:293px;">5 а</div><div class="lbl" style="left:455px;top:293px;">2</div><div class="lbl" style="left:505px;top:293px;">1</div><div class="abs" style="left:12px;top:313px;width:736px;height:26px;background:#f5f5f5"></div><div class="abs" style="left:14px;top:315px;width:22px;height:22px;background:linear-gradient(to bottom,#a4a4ff,#5c5cf4 45%);font-size:11px;line-height:24px;text-align:center;padding-right:1px;color:#000;white-space:nowrap;overflow:hidden">ТП-</div><div class="lbl" style="left:63px;top:319px;">Технологии и<span style="letter-spacing:.9px">...</span></div><div class="lbl" style="left:163px;top:319px;">Тестов Богданова</div><div class="lbl" style="left:323px;top:319px;">5 а</div><div class="lbl" style="left:455px;top:319px;">2</div><div class="lbl" style="left:505px;top:319px;">1</div><div class="abs" style="left:14px;top:341px;width:22px;height:22px;background:linear-gradient(to bottom,#f0ffff,#c8fcfc 45%);font-size:11px;line-height:24px;text-align:center;padding-right:1px;color:#000;white-space:nowrap;overflow:hidden">ФВС</div><div class="lbl" style="left:63px;top:345px;">Физическо в<span style="letter-spacing:.9px">...</span></div><div class="lbl" style="left:163px;top:345px;">Тестов Хаджийска</div><div class="lbl" style="left:323px;top:345px;">5 а</div><div class="lbl" style="left:455px;top:345px;">3</div><div class="lbl" style="left:505px;top:345px;">1</div><div class="abs" style="left:12px;top:365px;width:736px;height:26px;background:#f5f5f5"></div><div class="abs" style="left:14px;top:367px;width:22px;height:22px;background:linear-gradient(to bottom,#a4a440,#7c7c00 45%);font-size:11px;line-height:24px;text-align:center;padding-right:1px;color:#000;white-space:nowrap;overflow:hidden">ФрЕ</div><div class="lbl" style="left:63px;top:371px;">Френски език<span style="letter-spacing:.9px">...</span></div><div class="lbl" style="left:163px;top:371px;">Тестов Николова</div><div class="lbl" style="left:323px;top:371px;">5 а</div><div class="lbl" style="left:455px;top:371px;">4</div><div class="lbl" style="left:505px;top:371px;">1</div><div class="abs" style="left:14px;top:393px;width:22px;height:22px;background:linear-gradient(to bottom,#a4a440,#7c7c00 45%);font-size:11px;line-height:24px;text-align:center;padding-right:1px;color:#000;white-space:nowrap;overflow:hidden">ФрЕ</div><div class="lbl" style="left:63px;top:397px;">Френски език<span style="letter-spacing:.9px">...</span></div><div class="lbl" style="left:163px;top:397px;">Тестов Николова</div><div class="lbl" style="left:323px;top:397px;">5 а</div><div class="lbl" style="left:455px;top:397px;">2</div><div class="lbl" style="left:505px;top:397px;">1</div><div class="abs" style="left:12px;top:417px;width:736px;height:26px;background:#f5f5f5"></div><div class="abs" style="left:14px;top:419px;width:22px;height:22px;background:linear-gradient(to bottom,#c45050,#9c2828 45%);font-size:11px;line-height:24px;text-align:center;padding-right:1px;color:#000;white-space:nowrap;overflow:hidden">ЧП-</div><div class="lbl" style="left:63px;top:423px;">Човекът и пр<span style="letter-spacing:.9px">...</span></div><div class="lbl" style="left:163px;top:423px;">Тестов Цветанова</div><div class="lbl" style="left:323px;top:423px;">5 а</div><div class="lbl" style="left:455px;top:423px;">3</div><div class="lbl" style="left:505px;top:423px;">1</div><svg class="abs" style="left:560px;top:102px;" width="24" height="350" viewBox="580 490 24 350"><rect x="585.7" y="496.9" width="12" height="12.600" fill="#fff" opacity=".85"/><path d="M587.9 502.2V508.5H595.9V502.2" fill="#fff" stroke="#000" stroke-width="1.200"/><path d="M589.3 505.7L591.8 500.7L594.5 505.7Z" fill="#fff35e"/><rect x="590.8" y="505.0" width="2.100" height="3.200" fill="#f0a000"/><rect x="593.3" y="497.09999999999997" width="1.500" height="3" fill="#e80000"/><path d="M586.3 503.8L591.8 498.2L597.3 503.8" fill="none" stroke="#000" stroke-width="1.700" stroke-linejoin="miter"/><path d="M586.3 502.7L591.8 497.09999999999997L595.3 500.7" fill="none" stroke="#ffd640" stroke-width="1.300" stroke-linejoin="miter"/><rect x="585.7" y="522.9000000000001" width="12" height="12.600" fill="#fff" opacity=".85"/><path d="M587.9 528.2V534.5H595.9V528.2" fill="#fff" stroke="#000" stroke-width="1.200"/><path d="M589.3 531.7L591.8 526.7L594.5 531.7Z" fill="#fff35e"/><rect x="590.8" y="531.0" width="2.100" height="3.200" fill="#f0a000"/><rect x="593.3" y="523.1" width="1.500" height="3" fill="#e80000"/><path d="M586.3 529.8000000000001L591.8 524.2L597.3 529.8000000000001" fill="none" stroke="#000" stroke-width="1.700" stroke-linejoin="miter"/><path d="M586.3 528.7L591.8 523.1L595.3 526.7" fill="none" stroke="#ffd640" stroke-width="1.300" stroke-linejoin="miter"/><rect x="585.7" y="548.9000000000001" width="12" height="12.600" fill="#fff" opacity=".85"/><path d="M587.9 554.2V560.5H595.9V554.2" fill="#fff" stroke="#000" stroke-width="1.200"/><path d="M589.3 557.7L591.8 552.7L594.5 557.7Z" fill="#fff35e"/><rect x="590.8" y="557.0" width="2.100" height="3.200" fill="#f0a000"/><rect x="593.3" y="549.1" width="1.500" height="3" fill="#e80000"/><path d="M586.3 555.8000000000001L591.8 550.2L597.3 555.8000000000001" fill="none" stroke="#000" stroke-width="1.700" stroke-linejoin="miter"/><path d="M586.3 554.7L591.8 549.1L595.3 552.7" fill="none" stroke="#ffd640" stroke-width="1.300" stroke-linejoin="miter"/><rect x="585.7" y="574.9000000000001" width="12" height="12.600" fill="#fff" opacity=".85"/><path d="M587.9 580.2V586.5H595.9V580.2" fill="#fff" stroke="#000" stroke-width="1.200"/><path d="M589.3 583.7L591.8 578.7L594.5 583.7Z" fill="#fff35e"/><rect x="590.8" y="583.0" width="2.100" height="3.200" fill="#f0a000"/><rect x="593.3" y="575.1" width="1.500" height="3" fill="#e80000"/><path d="M586.3 581.8000000000001L591.8 576.2L597.3 581.8000000000001" fill="none" stroke="#000" stroke-width="1.700" stroke-linejoin="miter"/><path d="M586.3 580.7L591.8 575.1L595.3 578.7" fill="none" stroke="#ffd640" stroke-width="1.300" stroke-linejoin="miter"/><rect x="585.7" y="600.9000000000001" width="12" height="12.600" fill="#fff" opacity=".85"/><path d="M587.9 606.2V612.5H595.9V606.2" fill="#fff" stroke="#000" stroke-width="1.200"/><path d="M589.3 609.7L591.8 604.7L594.5 609.7Z" fill="#fff35e"/><rect x="590.8" y="609.0" width="2.100" height="3.200" fill="#f0a000"/><rect x="593.3" y="601.1" width="1.500" height="3" fill="#e80000"/><path d="M586.3 607.8000000000001L591.8 602.2L597.3 607.8000000000001" fill="none" stroke="#000" stroke-width="1.700" stroke-linejoin="miter"/><path d="M586.3 606.7L591.8 601.1L595.3 604.7" fill="none" stroke="#ffd640" stroke-width="1.300" stroke-linejoin="miter"/><rect x="585.7" y="626.9000000000001" width="12" height="12.600" fill="#fff" opacity=".85"/><path d="M587.9 632.2V638.5H595.9V632.2" fill="#fff" stroke="#000" stroke-width="1.200"/><path d="M589.3 635.7L591.8 630.7L594.5 635.7Z" fill="#fff35e"/><rect x="590.8" y="635.0" width="2.100" height="3.200" fill="#f0a000"/><rect x="593.3" y="627.1" width="1.500" height="3" fill="#e80000"/><path d="M586.3 633.8000000000001L591.8 628.2L597.3 633.8000000000001" fill="none" stroke="#000" stroke-width="1.700" stroke-linejoin="miter"/><path d="M586.3 632.7L591.8 627.1L595.3 630.7" fill="none" stroke="#ffd640" stroke-width="1.300" stroke-linejoin="miter"/><rect x="585.7" y="652.9000000000001" width="12" height="12.600" fill="#fff" opacity=".85"/><path d="M587.9 658.2V664.5H595.9V658.2" fill="#fff" stroke="#000" stroke-width="1.200"/><path d="M589.3 661.7L591.8 656.7L594.5 661.7Z" fill="#fff35e"/><rect x="590.8" y="661.0" width="2.100" height="3.200" fill="#f0a000"/><rect x="593.3" y="653.1" width="1.500" height="3" fill="#e80000"/><path d="M586.3 659.8000000000001L591.8 654.2L597.3 659.8000000000001" fill="none" stroke="#000" stroke-width="1.700" stroke-linejoin="miter"/><path d="M586.3 658.7L591.8 653.1L595.3 656.7" fill="none" stroke="#ffd640" stroke-width="1.300" stroke-linejoin="miter"/><rect x="585.7" y="678.9000000000001" width="12" height="12.600" fill="#fff" opacity=".85"/><path d="M587.9 684.2V690.5H595.9V684.2" fill="#fff" stroke="#000" stroke-width="1.200"/><path d="M589.3 687.7L591.8 682.7L594.5 687.7Z" fill="#fff35e"/><rect x="590.8" y="687.0" width="2.100" height="3.200" fill="#f0a000"/><rect x="593.3" y="679.1" width="1.500" height="3" fill="#e80000"/><path d="M586.3 685.8000000000001L591.8 680.2L597.3 685.8000000000001" fill="none" stroke="#000" stroke-width="1.700" stroke-linejoin="miter"/><path d="M586.3 684.7L591.8 679.1L595.3 682.7" fill="none" stroke="#ffd640" stroke-width="1.300" stroke-linejoin="miter"/><rect x="585.7" y="704.9000000000001" width="12" height="12.600" fill="#fff" opacity=".85"/><path d="M587.9 710.2V716.5H595.9V710.2" fill="#fff" stroke="#000" stroke-width="1.200"/><path d="M589.3 713.7L591.8 708.7L594.5 713.7Z" fill="#fff35e"/><rect x="590.8" y="713.0" width="2.100" height="3.200" fill="#f0a000"/><rect x="593.3" y="705.1" width="1.500" height="3" fill="#e80000"/><path d="M586.3 711.8000000000001L591.8 706.2L597.3 711.8000000000001" fill="none" stroke="#000" stroke-width="1.700" stroke-linejoin="miter"/><path d="M586.3 710.7L591.8 705.1L595.3 708.7" fill="none" stroke="#ffd640" stroke-width="1.300" stroke-linejoin="miter"/><rect x="585.7" y="730.9000000000001" width="12" height="12.600" fill="#fff" opacity=".85"/><path d="M587.9 736.2V742.5H595.9V736.2" fill="#fff" stroke="#000" stroke-width="1.200"/><path d="M589.3 739.7L591.8 734.7L594.5 739.7Z" fill="#fff35e"/><rect x="590.8" y="739.0" width="2.100" height="3.200" fill="#f0a000"/><rect x="593.3" y="731.1" width="1.500" height="3" fill="#e80000"/><path d="M586.3 737.8000000000001L591.8 732.2L597.3 737.8000000000001" fill="none" stroke="#000" stroke-width="1.700" stroke-linejoin="miter"/><path d="M586.3 736.7L591.8 731.1L595.3 734.7" fill="none" stroke="#ffd640" stroke-width="1.300" stroke-linejoin="miter"/><rect x="585.7" y="756.9000000000001" width="12" height="12.600" fill="#fff" opacity=".85"/><path d="M587.9 762.2V768.5H595.9V762.2" fill="#fff" stroke="#000" stroke-width="1.200"/><path d="M589.3 765.7L591.8 760.7L594.5 765.7Z" fill="#fff35e"/><rect x="590.8" y="765.0" width="2.100" height="3.200" fill="#f0a000"/><rect x="593.3" y="757.1" width="1.500" height="3" fill="#e80000"/><path d="M586.3 763.8000000000001L591.8 758.2L597.3 763.8000000000001" fill="none" stroke="#000" stroke-width="1.700" stroke-linejoin="miter"/><path d="M586.3 762.7L591.8 757.1L595.3 760.7" fill="none" stroke="#ffd640" stroke-width="1.300" stroke-linejoin="miter"/><rect x="585.7" y="782.9000000000001" width="12" height="12.600" fill="#fff" opacity=".85"/><path d="M587.9 788.2V794.5H595.9V788.2" fill="#fff" stroke="#000" stroke-width="1.200"/><path d="M589.3 791.7L591.8 786.7L594.5 791.7Z" fill="#fff35e"/><rect x="590.8" y="791.0" width="2.100" height="3.200" fill="#f0a000"/><rect x="593.3" y="783.1" width="1.500" height="3" fill="#e80000"/><path d="M586.3 789.8000000000001L591.8 784.2L597.3 789.8000000000001" fill="none" stroke="#000" stroke-width="1.700" stroke-linejoin="miter"/><path d="M586.3 788.7L591.8 783.1L595.3 786.7" fill="none" stroke="#ffd640" stroke-width="1.300" stroke-linejoin="miter"/><rect x="585.7" y="808.9000000000001" width="12" height="12.600" fill="#fff" opacity=".85"/><path d="M587.9 814.2V820.5H595.9V814.2" fill="#fff" stroke="#000" stroke-width="1.200"/><path d="M589.3 817.7L591.8 812.7L594.5 817.7Z" fill="#fff35e"/><rect x="590.8" y="817.0" width="2.100" height="3.200" fill="#f0a000"/><rect x="593.3" y="809.1" width="1.500" height="3" fill="#e80000"/><path d="M586.3 815.8000000000001L591.8 810.2L597.3 815.8000000000001" fill="none" stroke="#000" stroke-width="1.700" stroke-linejoin="miter"/><path d="M586.3 814.7L591.8 809.1L595.3 812.7" fill="none" stroke="#ffd640" stroke-width="1.300" stroke-linejoin="miter"/></svg><div class="btn" style="left:8px;top:506px;width:89px;height:25px;line-height:21px;border:2px solid #0078d7;">Нов час</div><div class="btn" style="left:108px;top:506px;width:94px;height:25px;line-height:23px;">Корекция на часа</div><div class="btn" style="left:211px;top:506px;width:91px;height:25px;line-height:23px;">Премахни</div><div class="btn" style="left:403px;top:506px;width:90px;height:25px;line-height:23px;">Копирай към</div><div class="btn" style="left:505px;top:506px;width:91px;height:25px;line-height:23px;">Добави други</div><div class="btn" style="left:604px;top:506px;width:157px;height:25px;line-height:23px;">Персонализирани полета</div><div class="btn" style="left:775px;top:506px;width:100px;height:25px;line-height:23px;">Затвори</div><svg class="abs" style="left:868px;top:532px;" width="12" height="12" viewBox="0 0 12 12"><rect x="8" y="2" width="2" height="2" fill="#b8b8b8"/><rect x="8" y="5" width="2" height="2" fill="#b8b8b8"/><rect x="8" y="8" width="2" height="2" fill="#b8b8b8"/><rect x="5" y="5" width="2" height="2" fill="#b8b8b8"/><rect x="5" y="8" width="2" height="2" fill="#b8b8b8"/><rect x="2" y="8" width="2" height="2" fill="#b8b8b8"/></svg></div></body></html>
